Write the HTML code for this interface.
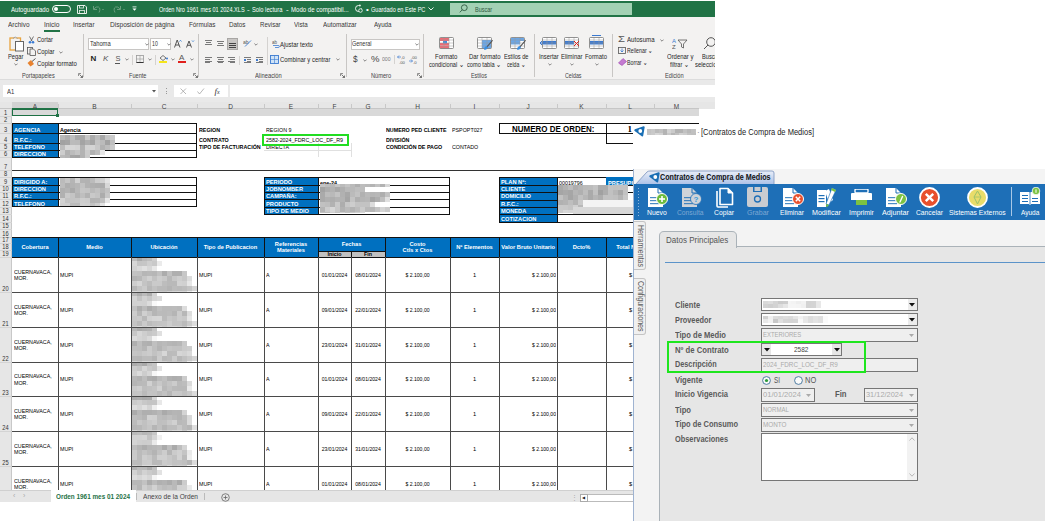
<!DOCTYPE html><html><head><meta charset="utf-8"><style>
html,body{margin:0;padding:0;width:1048px;height:521px;overflow:hidden;background:#fff;font-family:"Liberation Sans",sans-serif}
div,svg{position:absolute}
div div{position:absolute}
.t{white-space:nowrap}
.t div{position:static}
</style></head><body>
<div style="left:0px;top:1px;width:715px;height:16px;background:#217346"></div>
<div class="t" style="left:11.00px;top:4.6px;color:#fff;font-size:8px;line-height:10px;transform:scaleX(0.7560);transform-origin:0 0;"><span id="m1">Autoguardado</span></div>
<div style="left:52px;top:5px;width:19px;height:8px;border:1px solid #fff;border-radius:5px;box-sizing:border-box"></div>
<div style="left:54px;top:7px;width:4px;height:4px;background:#fff;border-radius:50%"></div>
<svg style="position:absolute;left:77px;top:5px" width="10" height="9" viewBox="0 0 10 9"><path d="M0.5 0.5 H8 L9.5 2 V8.5 H0.5 Z" fill="none" stroke="#e8f0ea" stroke-width="1"/><rect x="2.5" y="0.5" width="4" height="2.5" fill="none" stroke="#e8f0ea" stroke-width="0.8"/><rect x="2.5" y="5.5" width="5" height="3" fill="none" stroke="#e8f0ea" stroke-width="0.8"/></svg>
<svg style="position:absolute;left:92px;top:5px" width="34" height="9" viewBox="0 0 34 9"><path d="M1.5 1 V4.5 H5 M1.8 4.3 Q4 1 6.5 2 Q9 3.5 7 7.5" fill="none" stroke="#6a9e7e" stroke-width="1"/><path d="M10 4 L11 5 L12 4" fill="none" stroke="#6a9e7e" stroke-width="0.7"/><path d="M28.5 1 V4.5 H25 M28.2 4.3 Q26 1 23.5 2 Q21 3.5 23 7.5" fill="none" stroke="#6a9e7e" stroke-width="1"/><path d="M31 4 L32 5 L33 4" fill="none" stroke="#6a9e7e" stroke-width="0.7"/></svg>
<svg style="position:absolute;left:132px;top:6px" width="5" height="6" viewBox="0 0 5 6"><rect x="0.5" y="0.5" width="4" height="0.8" fill="#fff"/><path d="M0.5 2.5 L2.5 4.8 L4.5 2.5 Z" fill="#fff"/></svg>
<div class="t" style="left:158.60px;top:4.6px;color:#fff;font-size:8px;line-height:10px;transform:scaleX(0.6949);transform-origin:0 0;"><span id="m2">Orden Nro 1961 mes 01 2024.XLS</span></div>
<div class="t" style="left:247px;top:4.6px;color:#fff;font-size:8px;line-height:10px">-</div>
<div class="t" style="left:252.20px;top:4.6px;color:#fff;font-size:8px;line-height:10px;transform:scaleX(0.7195);transform-origin:0 0;"><span id="m3">Solo lectura</span></div>
<div class="t" style="left:286px;top:4.6px;color:#fff;font-size:8px;line-height:10px">-</div>
<div class="t" style="left:291.20px;top:4.6px;color:#fff;font-size:8px;line-height:10px;transform:scaleX(0.7574);transform-origin:0 0;"><span id="m4">Modo de compatibil...</span></div>
<svg style="position:absolute;left:354px;top:4px" width="9" height="9" viewBox="0 0 9 9"><path d="M7.5 4.5 A3 3 0 1 1 4.5 1.5 L6 1.5" fill="none" stroke="#fff" stroke-width="0.9"/><path d="M5.5 0.3 L6.8 1.5 L5.5 2.7" fill="none" stroke="#fff" stroke-width="0.8"/><circle cx="6.5" cy="6.5" r="1.8" fill="#217346" stroke="#fff" stroke-width="0.8"/></svg>
<div class="t" style="left:366px;top:4.6px;color:#fff;font-size:8px;line-height:10px">•</div>
<div class="t" style="left:371.00px;top:4.6px;color:#fff;font-size:8px;line-height:10px;transform:scaleX(0.6949);transform-origin:0 0;"><span id="m5">Guardado en Este PC</span></div>
<svg style="position:absolute;left:428px;top:7px" width="6" height="4" viewBox="0 0 6 4"><path d="M0.5 0.5 L3 3 L5.5 0.5" fill="none" stroke="#fff" stroke-width="0.9"/></svg>
<div style="left:450px;top:3px;width:182px;height:12px;background:#a3d1b4"></div>
<svg style="position:absolute;left:459px;top:4px" width="9" height="9" viewBox="0 0 9 9"><circle cx="5.3" cy="3.7" r="2.9" fill="none" stroke="#2f5a40" stroke-width="0.9"/><path d="M3.3 5.8 L0.7 8.4" stroke="#2f5a40" stroke-width="0.9"/></svg>
<div class="t" style="left:475.00px;top:4.6px;color:#2f5a40;font-size:8px;line-height:10px;transform:scaleX(0.6906);transform-origin:0 0;"><span id="m6">Buscar</span></div>
<div style="left:0px;top:17px;width:715px;height:62px;background:#f3f2f1"></div>
<div class="t" style="left:7.70px;top:20.4px;color:#383838;font-size:8px;line-height:10px;transform:scaleX(0.8056);transform-origin:0 0;"><span id="m7">Archivo</span></div>
<div class="t" style="left:43.80px;top:20.4px;color:#383838;font-size:8px;line-height:10px;transform:scaleX(0.8294);transform-origin:0 0;"><span id="m8">Inicio</span></div>
<div class="t" style="left:73.00px;top:20.4px;color:#383838;font-size:8px;line-height:10px;transform:scaleX(0.7926);transform-origin:0 0;"><span id="m9">Insertar</span></div>
<div class="t" style="left:110.00px;top:20.4px;color:#383838;font-size:8px;line-height:10px;transform:scaleX(0.8227);transform-origin:0 0;"><span id="m10">Disposición de página</span></div>
<div class="t" style="left:188.70px;top:20.4px;color:#383838;font-size:8px;line-height:10px;transform:scaleX(0.7888);transform-origin:0 0;"><span id="m11">Fórmulas</span></div>
<div class="t" style="left:229.40px;top:20.4px;color:#383838;font-size:8px;line-height:10px;transform:scaleX(0.7892);transform-origin:0 0;"><span id="m12">Datos</span></div>
<div class="t" style="left:260.00px;top:20.4px;color:#383838;font-size:8px;line-height:10px;transform:scaleX(0.7594);transform-origin:0 0;"><span id="m13">Revisar</span></div>
<div class="t" style="left:294.30px;top:20.4px;color:#383838;font-size:8px;line-height:10px;transform:scaleX(0.7766);transform-origin:0 0;"><span id="m14">Vista</span></div>
<div class="t" style="left:323.30px;top:20.4px;color:#383838;font-size:8px;line-height:10px;transform:scaleX(0.7895);transform-origin:0 0;"><span id="m15">Automatizar</span></div>
<div class="t" style="left:373.50px;top:20.4px;color:#383838;font-size:8px;line-height:10px;transform:scaleX(0.7762);transform-origin:0 0;"><span id="m16">Ayuda</span></div>
<div style="left:44px;top:30px;width:16px;height:2px;background:#217346"></div>
<div style="left:83px;top:34px;width:1px;height:43px;background:#c8c6c4"></div>
<div style="left:198px;top:34px;width:1px;height:43px;background:#c8c6c4"></div>
<div style="left:346px;top:34px;width:1px;height:43px;background:#c8c6c4"></div>
<div style="left:423px;top:34px;width:1px;height:43px;background:#c8c6c4"></div>
<div style="left:534px;top:34px;width:1px;height:43px;background:#c8c6c4"></div>
<div style="left:612px;top:34px;width:1px;height:43px;background:#c8c6c4"></div>
<div class="t" style="left:22.00px;top:71px;color:#444;font-size:7.5px;line-height:9px;transform:scaleX(0.7398);transform-origin:0 0;"><span id="m17">Portapapeles</span></div>
<div class="t" style="left:129.00px;top:71px;color:#444;font-size:7.5px;line-height:9px;transform:scaleX(0.7449);transform-origin:0 0;"><span id="m18">Fuente</span></div>
<div class="t" style="left:255.00px;top:71px;color:#444;font-size:7.5px;line-height:9px;transform:scaleX(0.7744);transform-origin:0 0;"><span id="m19">Alineación</span></div>
<div class="t" style="left:370.50px;top:71px;color:#444;font-size:7.5px;line-height:9px;transform:scaleX(0.7532);transform-origin:0 0;"><span id="m20">Número</span></div>
<div class="t" style="left:470.70px;top:71px;color:#444;font-size:7.5px;line-height:9px;transform:scaleX(0.7197);transform-origin:0 0;"><span id="m21">Estilos</span></div>
<div class="t" style="left:565.00px;top:71px;color:#444;font-size:7.5px;line-height:9px;transform:scaleX(0.7064);transform-origin:0 0;"><span id="m22">Celdas</span></div>
<div class="t" style="left:664.50px;top:71px;color:#444;font-size:7.5px;line-height:9px;transform:scaleX(0.7599);transform-origin:0 0;"><span id="m23">Edición</span></div>
<svg style="position:absolute;left:78px;top:73px" width="5" height="5" viewBox="0 0 5 5"><path d="M0.5 3 V0.5 H3" fill="none" stroke="#777" stroke-width="0.8"/><path d="M1.5 1.5 L4.5 4.5 M4.5 2.5 V4.5 H2.5" fill="none" stroke="#555" stroke-width="0.8"/></svg>
<svg style="position:absolute;left:193px;top:73px" width="5" height="5" viewBox="0 0 5 5"><path d="M0.5 3 V0.5 H3" fill="none" stroke="#777" stroke-width="0.8"/><path d="M1.5 1.5 L4.5 4.5 M4.5 2.5 V4.5 H2.5" fill="none" stroke="#555" stroke-width="0.8"/></svg>
<svg style="position:absolute;left:340px;top:73px" width="5" height="5" viewBox="0 0 5 5"><path d="M0.5 3 V0.5 H3" fill="none" stroke="#777" stroke-width="0.8"/><path d="M1.5 1.5 L4.5 4.5 M4.5 2.5 V4.5 H2.5" fill="none" stroke="#555" stroke-width="0.8"/></svg>
<svg style="position:absolute;left:417px;top:73px" width="5" height="5" viewBox="0 0 5 5"><path d="M0.5 3 V0.5 H3" fill="none" stroke="#777" stroke-width="0.8"/><path d="M1.5 1.5 L4.5 4.5 M4.5 2.5 V4.5 H2.5" fill="none" stroke="#555" stroke-width="0.8"/></svg>
<svg style="position:absolute;left:9px;top:36px" width="16" height="16" viewBox="0 0 16 16"><rect x="1" y="2" width="10.5" height="12" fill="none" stroke="#e8a33d" stroke-width="1.3"/><path d="M4 2.5 Q6 -0.5 8.5 2.5" fill="#fff" stroke="#888" stroke-width="0.8"/><rect x="6.5" y="5.5" width="8" height="9.5" fill="#fff" stroke="#666" stroke-width="1"/></svg>
<div class="t" style="left:7.70px;top:52px;color:#262626;font-size:8px;line-height:10px;transform:scaleX(0.7163);transform-origin:0 0;"><span id="m24">Pegar</span></div>
<svg style="position:absolute;left:13.5px;top:63px" width="4" height="3" viewBox="0 0 4 3"><path d="M0.4 0.6 L2 2.2 L3.6 0.6" fill="none" stroke="#555" stroke-width="0.7"/></svg>
<svg style="position:absolute;left:28px;top:36px" width="7" height="8" viewBox="0 0 7 8"><path d="M1.5 0.5 L4 5 M5.5 0.5 L3 5" stroke="#555" stroke-width="0.8"/><circle cx="2" cy="6.3" r="1.3" fill="#3b7ad0"/><circle cx="5" cy="6.3" r="1.3" fill="#3b7ad0"/></svg>
<div class="t" style="left:37.00px;top:35px;color:#262626;font-size:8px;line-height:10px;transform:scaleX(0.7106);transform-origin:0 0;"><span id="m25">Cortar</span></div>
<svg style="position:absolute;left:27px;top:47px" width="9" height="9" viewBox="0 0 9 9"><rect x="0.5" y="0.5" width="5" height="6.5" fill="none" stroke="#555" stroke-width="0.8"/><path d="M3 2 H6.5 L8.5 4 V8.5 H3 Z" fill="#f3f2f1" stroke="#555" stroke-width="0.8"/></svg>
<div class="t" style="left:37.00px;top:47px;color:#262626;font-size:8px;line-height:10px;transform:scaleX(0.7422);transform-origin:0 0;"><span id="m26">Copiar</span></div>
<svg style="position:absolute;left:58.5px;top:51px" width="4" height="3" viewBox="0 0 4 3"><path d="M0.4 0.6 L2 2.2 L3.6 0.6" fill="none" stroke="#555" stroke-width="0.7"/></svg>
<svg style="position:absolute;left:27px;top:58px" width="9" height="9" viewBox="0 0 9 9"><path d="M0.5 5 L4 2 L7 6 L3.5 8.5 Z" fill="#e8822e"/><path d="M5 3.5 L8.5 0.5" stroke="#555" stroke-width="1"/></svg>
<div class="t" style="left:37.00px;top:59px;color:#262626;font-size:8px;line-height:10px;transform:scaleX(0.7521);transform-origin:0 0;"><span id="m27">Copiar formato</span></div>
<div style="left:88px;top:38px;width:61px;height:12px;background:#fff;border:1px solid #c8c6c4;box-sizing:border-box"></div>
<div class="t" style="left:90.30px;top:39px;color:#333;font-size:8px;line-height:10px;transform:scaleX(0.7271);transform-origin:0 0;"><span id="m28">Tahoma</span></div>
<svg style="position:absolute;left:144.5px;top:43px" width="4" height="3" viewBox="0 0 4 3"><path d="M0.4 0.6 L2 2.2 L3.6 0.6" fill="none" stroke="#555" stroke-width="0.7"/></svg>
<div style="left:150px;top:38px;width:21px;height:12px;background:#fff;border:1px solid #c8c6c4;box-sizing:border-box"></div>
<div class="t" style="left:151.80px;top:39px;color:#333;font-size:8px;line-height:10px;transform:scaleX(0.6512);transform-origin:0 0;"><span id="m29">10</span></div>
<svg style="position:absolute;left:166.5px;top:43px" width="4" height="3" viewBox="0 0 4 3"><path d="M0.4 0.6 L2 2.2 L3.6 0.6" fill="none" stroke="#555" stroke-width="0.7"/></svg>
<svg style="position:absolute;left:174px;top:39px" width="21" height="9" viewBox="0 0 21 9"><path d="M0.5 8.5 L3.2 1 L6 8.5 M1.5 6 H5" fill="none" stroke="#444" stroke-width="0.9"/><path d="M5.5 2.5 L6.5 1.3 L7.5 2.5" fill="none" stroke="#2b79d0" stroke-width="0.8"/><path d="M12.5 8.5 L15 2 L17.5 8.5 M13.4 6.3 H16.6" fill="none" stroke="#444" stroke-width="0.9"/><path d="M18 1.5 L19 2.6 L20 1.5" fill="none" stroke="#2b79d0" stroke-width="0.8"/></svg>
<div class="t" style="left:90.6px;top:54px;color:#222;font-size:8px;line-height:10px;font-weight:bold">N</div>
<div class="t" style="left:103px;top:54px;color:#555;font-size:8px;line-height:10px;font-style:italic">K</div>
<div class="t" style="left:115.5px;top:54px;color:#555;font-size:7.5px;line-height:10px">S</div>
<div style="left:115px;top:63px;width:5px;height:1px;background:#555"></div>
<svg style="position:absolute;left:124.5px;top:58px" width="4" height="3" viewBox="0 0 4 3"><path d="M0.4 0.6 L2 2.2 L3.6 0.6" fill="none" stroke="#555" stroke-width="0.7"/></svg>
<div style="left:132px;top:55px;width:1px;height:10px;background:#d4d2d0"></div>
<svg style="position:absolute;left:136px;top:55px" width="8" height="8" viewBox="0 0 8 8"><rect x="0.5" y="0.5" width="7" height="7" fill="none" stroke="#999" stroke-width="0.8"/><path d="M4 0.5 V7.5 M0.5 4 H7.5" stroke="#999" stroke-width="0.6"/><path d="M0.5 7.5 H7.5" stroke="#333" stroke-width="1"/></svg>
<svg style="position:absolute;left:147.5px;top:58px" width="4" height="3" viewBox="0 0 4 3"><path d="M0.4 0.6 L2 2.2 L3.6 0.6" fill="none" stroke="#555" stroke-width="0.7"/></svg>
<div style="left:155px;top:55px;width:1px;height:10px;background:#d4d2d0"></div>
<svg style="position:absolute;left:159px;top:55px" width="9" height="6" viewBox="0 0 9 6"><path d="M1 3 L4 0.5 L7 3 L4 5.5 Z" fill="none" stroke="#555" stroke-width="0.8"/><circle cx="8" cy="3.5" r="1" fill="#3b7ad0"/></svg>
<div style="left:159px;top:61px;width:8px;height:2px;background:#f5e51c"></div>
<svg style="position:absolute;left:170.5px;top:58px" width="4" height="3" viewBox="0 0 4 3"><path d="M0.4 0.6 L2 2.2 L3.6 0.6" fill="none" stroke="#555" stroke-width="0.7"/></svg>
<div class="t" style="left:179px;top:53px;color:#555;font-size:8px;line-height:9px">A</div>
<div style="left:178px;top:61px;width:8px;height:2px;background:#e0201c"></div>
<svg style="position:absolute;left:189.5px;top:58px" width="4" height="3" viewBox="0 0 4 3"><path d="M0.4 0.6 L2 2.2 L3.6 0.6" fill="none" stroke="#555" stroke-width="0.7"/></svg>
<div style="left:205px;top:39.5px;width:7px;height:1px;background:#7a7a7a"></div>
<div style="left:206px;top:41.7px;width:5px;height:1px;background:#7a7a7a"></div>
<div style="left:205px;top:43.9px;width:7px;height:1px;background:#7a7a7a"></div>
<div style="left:217px;top:41.0px;width:7px;height:1px;background:#7a7a7a"></div>
<div style="left:218px;top:43.2px;width:5px;height:1px;background:#7a7a7a"></div>
<div style="left:217px;top:45.4px;width:7px;height:1px;background:#7a7a7a"></div>
<div style="left:227px;top:38px;width:11px;height:12px;background:#c8c6c4;border:1px solid #a8a6a4;box-sizing:border-box"></div>
<div style="left:229px;top:42.5px;width:7px;height:1px;background:#444"></div>
<div style="left:229px;top:44.7px;width:7px;height:1px;background:#444"></div>
<div style="left:229px;top:46.9px;width:7px;height:1px;background:#444"></div>
<svg style="position:absolute;left:243px;top:39px" width="14" height="8" viewBox="0 0 14 8"><text x="0" y="5" font-size="5" fill="#555" font-family="Liberation Sans">ab</text><path d="M2 7.5 L8 1.5" stroke="#3b7ad0" stroke-width="0.9"/></svg>
<svg style="position:absolute;left:254.0px;top:43px" width="4" height="3" viewBox="0 0 4 3"><path d="M0.4 0.6 L2 2.2 L3.6 0.6" fill="none" stroke="#555" stroke-width="0.7"/></svg>
<div style="left:267px;top:37px;width:1px;height:28px;background:#d4d2d0"></div>
<svg style="position:absolute;left:272px;top:40px" width="8" height="8" viewBox="0 0 8 8"><text x="0" y="4" font-size="4.5" fill="#555" font-family="Liberation Sans">ab</text><path d="M1 5.5 H6 Q7.5 5.5 7.5 6.5 Q7.5 7.5 6 7.5 H3" fill="none" stroke="#3b7ad0" stroke-width="0.8"/></svg>
<div class="t" style="left:280.40px;top:39.7px;color:#262626;font-size:8px;line-height:10px;transform:scaleX(0.7398);transform-origin:0 0;"><span id="m30">Ajustar texto</span></div>
<div style="left:205px;top:57.0px;width:7px;height:1px;background:#7a7a7a"></div>
<div style="left:205px;top:58.8px;width:5px;height:1px;background:#7a7a7a"></div>
<div style="left:205px;top:60.6px;width:7px;height:1px;background:#7a7a7a"></div>
<div style="left:205px;top:62.4px;width:5px;height:1px;background:#7a7a7a"></div>
<div style="left:217px;top:57.0px;width:7px;height:1px;background:#7a7a7a"></div>
<div style="left:218px;top:58.8px;width:5px;height:1px;background:#7a7a7a"></div>
<div style="left:217px;top:60.6px;width:7px;height:1px;background:#7a7a7a"></div>
<div style="left:218px;top:62.4px;width:5px;height:1px;background:#7a7a7a"></div>
<div style="left:228px;top:57.0px;width:7px;height:1px;background:#7a7a7a"></div>
<div style="left:230px;top:58.8px;width:5px;height:1px;background:#7a7a7a"></div>
<div style="left:228px;top:60.6px;width:7px;height:1px;background:#7a7a7a"></div>
<div style="left:230px;top:62.4px;width:5px;height:1px;background:#7a7a7a"></div>
<div style="left:239px;top:56px;width:1px;height:9px;background:#d4d2d0"></div>
<div style="left:244px;top:57.0px;width:7px;height:1px;background:#7a7a7a"></div>
<div style="left:247px;top:58.8px;width:4px;height:1px;background:#7a7a7a"></div>
<div style="left:247px;top:60.6px;width:4px;height:1px;background:#7a7a7a"></div>
<div style="left:244px;top:62.4px;width:7px;height:1px;background:#7a7a7a"></div>
<div style="left:244px;top:59px;width:2px;height:2px;background:#3b7ad0"></div>
<div style="left:256px;top:57.0px;width:7px;height:1px;background:#7a7a7a"></div>
<div style="left:259px;top:58.8px;width:4px;height:1px;background:#7a7a7a"></div>
<div style="left:259px;top:60.6px;width:4px;height:1px;background:#7a7a7a"></div>
<div style="left:256px;top:62.4px;width:7px;height:1px;background:#7a7a7a"></div>
<div style="left:256px;top:59px;width:2px;height:2px;background:#3b7ad0"></div>
<svg style="position:absolute;left:270px;top:55px" width="9" height="9" viewBox="0 0 9 9"><rect x="0.5" y="0.5" width="8" height="8" fill="#cfe3f7" stroke="#3b7ad0" stroke-width="0.9"/><path d="M4.5 0.5 V8.5 M0.5 4.5 H8.5" stroke="#3b7ad0" stroke-width="0.6"/></svg>
<div class="t" style="left:280.40px;top:54.7px;color:#262626;font-size:8px;line-height:10px;transform:scaleX(0.7408);transform-origin:0 0;"><span id="m31">Combinar y centrar</span></div>
<svg style="position:absolute;left:335.5px;top:58px" width="4" height="3" viewBox="0 0 4 3"><path d="M0.4 0.6 L2 2.2 L3.6 0.6" fill="none" stroke="#555" stroke-width="0.7"/></svg>
<div style="left:350.5px;top:38.5px;width:69px;height:11px;background:#fff;border:1px solid #c8c6c4;box-sizing:border-box"></div>
<div class="t" style="left:352.00px;top:39px;color:#333;font-size:8px;line-height:10px;transform:scaleX(0.6850);transform-origin:0 0;"><span id="m32">General</span></div>
<svg style="position:absolute;left:414.5px;top:43px" width="4" height="3" viewBox="0 0 4 3"><path d="M0.4 0.6 L2 2.2 L3.6 0.6" fill="none" stroke="#555" stroke-width="0.7"/></svg>
<div class="t" style="left:353.00px;top:54px;color:#444;font-size:9px;line-height:10px;transform:scaleX(0.9171);transform-origin:0 0;"><span id="m33">$</span></div>
<svg style="position:absolute;left:362.5px;top:59px" width="4" height="3" viewBox="0 0 4 3"><path d="M0.4 0.6 L2 2.2 L3.6 0.6" fill="none" stroke="#555" stroke-width="0.7"/></svg>
<div class="t" style="left:370.50px;top:54px;color:#444;font-size:9px;line-height:10px;transform:scaleX(1.0604);transform-origin:0 0;"><span id="m34">%</span></div>
<div class="t" style="left:382.40px;top:56px;color:#777;font-size:5.5px;line-height:7px;transform:scaleX(0.9361);transform-origin:0 0;"><span id="m35">000</span></div>
<div style="left:394px;top:55px;width:1px;height:9px;background:#d4d2d0"></div>
<svg style="position:absolute;left:397px;top:54px" width="22" height="10" viewBox="0 0 22 10"><path d="M0.5 3 H4 M0.5 3 L2 1.5 M0.5 3 L2 4.5" stroke="#3b7ad0" stroke-width="0.7" fill="none"/><text x="4" y="4.5" font-size="4.2" fill="#555" font-family="Liberation Sans">,0</text><text x="2" y="9.5" font-size="4.2" fill="#555" font-family="Liberation Sans">,00</text><text x="14" y="4.5" font-size="4.2" fill="#555" font-family="Liberation Sans">,00</text><path d="M12 7 H15.5 L14 5.5 M15.5 7 L14 8.5" stroke="#3b7ad0" stroke-width="0.7" fill="none"/><text x="16" y="9.5" font-size="4.2" fill="#555" font-family="Liberation Sans">,0</text></svg>
<svg style="position:absolute;left:439px;top:37px" width="15" height="12" viewBox="0 0 15 12"><rect x="0.5" y="0.5" width="14" height="11" rx="1" fill="#fff"/><rect x="1" y="1" width="9" height="3" fill="#ee6a74"/><rect x="1" y="8.5" width="9" height="3" fill="#ee6a74"/><rect x="1" y="6" width="9" height="2.5" fill="#ee6a74"/><rect x="4" y="4" width="4" height="2.3" fill="#3b8ee0"/><path d="M0.5 3.0 H14.5" stroke="#999" stroke-width="0.5"/><path d="M0.5 6.0 H14.5" stroke="#999" stroke-width="0.5"/><path d="M0.5 9.0 H14.5" stroke="#999" stroke-width="0.5"/><path d="M5.0 0.5 V11.5" stroke="#999" stroke-width="0.5"/><path d="M10.0 0.5 V11.5" stroke="#999" stroke-width="0.5"/><rect x="0.5" y="0.5" width="14" height="11" rx="1" fill="none" stroke="#777" stroke-width="0.8"/></svg>
<svg style="position:absolute;left:477px;top:37px" width="15" height="12" viewBox="0 0 15 12"><rect x="0.5" y="0.5" width="14" height="11" rx="1" fill="#fff"/><rect x="5" y="3" width="9" height="8.5" fill="#6aa7e8"/><path d="M0.5 3.0 H14.5" stroke="#999" stroke-width="0.5"/><path d="M0.5 6.0 H14.5" stroke="#999" stroke-width="0.5"/><path d="M0.5 9.0 H14.5" stroke="#999" stroke-width="0.5"/><path d="M5.0 0.5 V11.5" stroke="#999" stroke-width="0.5"/><path d="M10.0 0.5 V11.5" stroke="#999" stroke-width="0.5"/><rect x="0.5" y="0.5" width="14" height="11" rx="1" fill="none" stroke="#777" stroke-width="0.8"/></svg>
<svg style="position:absolute;left:483px;top:40px" width="10" height="11" viewBox="0 0 10 11"><path d="M9.3 0.7 L4.2 6.6" stroke="#555" stroke-width="1.1" stroke-linecap="round"/><path d="M3.6 6 Q1.2 6.5 1 9.8 Q4.3 9.8 4.9 7.2 Z" fill="#3b8ee0"/></svg>
<svg style="position:absolute;left:510px;top:37px" width="15" height="12" viewBox="0 0 15 12"><rect x="0.5" y="0.5" width="14" height="11" rx="1" fill="#fff"/><rect x="1" y="1" width="13" height="3" fill="#6aa7e8"/><rect x="1" y="4" width="9" height="3.5" fill="#6aa7e8"/><path d="M0.5 3.0 H14.5" stroke="#999" stroke-width="0.5"/><path d="M0.5 6.0 H14.5" stroke="#999" stroke-width="0.5"/><path d="M0.5 9.0 H14.5" stroke="#999" stroke-width="0.5"/><path d="M5.0 0.5 V11.5" stroke="#999" stroke-width="0.5"/><path d="M10.0 0.5 V11.5" stroke="#999" stroke-width="0.5"/><rect x="0.5" y="0.5" width="14" height="11" rx="1" fill="none" stroke="#777" stroke-width="0.8"/></svg>
<svg style="position:absolute;left:516px;top:40px" width="10" height="11" viewBox="0 0 10 11"><path d="M9.3 0.7 L4.2 6.6" stroke="#555" stroke-width="1.1" stroke-linecap="round"/><path d="M3.6 6 Q1.2 6.5 1 9.8 Q4.3 9.8 4.9 7.2 Z" fill="#3b8ee0"/></svg>
<div class="t" style="left:434.80px;top:52px;color:#262626;font-size:7.5px;line-height:9px;transform:scaleX(0.8018);transform-origin:0 0;"><span id="m36">Formato</span></div>
<div class="t" style="left:428.70px;top:60px;color:#262626;font-size:7.5px;line-height:9px;transform:scaleX(0.7509);transform-origin:0 0;"><span id="m37">condicional ⌄</span></div>
<div class="t" style="left:468.75px;top:52px;color:#262626;font-size:7.5px;line-height:9px;transform:scaleX(0.7953);transform-origin:0 0;"><span id="m38">Dar formato</span></div>
<div class="t" style="left:466.90px;top:60px;color:#262626;font-size:7.5px;line-height:9px;transform:scaleX(0.7514);transform-origin:0 0;"><span id="m39">como tabla ⌄</span></div>
<div class="t" style="left:504.45px;top:52px;color:#262626;font-size:7.5px;line-height:9px;transform:scaleX(0.7531);transform-origin:0 0;"><span id="m40">Estilos de</span></div>
<div class="t" style="left:506.95px;top:60px;color:#262626;font-size:7.5px;line-height:9px;transform:scaleX(0.6848);transform-origin:0 0;"><span id="m41">celda ⌄</span></div>
<svg style="position:absolute;left:541.5px;top:37px" width="15" height="12" viewBox="0 0 15 12"><rect x="0.5" y="0.5" width="14" height="11" rx="1" fill="#fff"/><rect x="1" y="4" width="13" height="3.5" fill="#3b7ad0"/><path d="M0.5 3.0 H14.5" stroke="#999" stroke-width="0.5"/><path d="M0.5 6.0 H14.5" stroke="#999" stroke-width="0.5"/><path d="M0.5 9.0 H14.5" stroke="#999" stroke-width="0.5"/><path d="M5.0 0.5 V11.5" stroke="#999" stroke-width="0.5"/><path d="M10.0 0.5 V11.5" stroke="#999" stroke-width="0.5"/><rect x="0.5" y="0.5" width="14" height="11" rx="1" fill="none" stroke="#777" stroke-width="0.8"/></svg>
<svg style="position:absolute;left:539px;top:40px" width="6" height="6" viewBox="0 0 6 6"><path d="M5.5 3 H1 M3 1 L1 3 L3 5" stroke="#3b7ad0" stroke-width="1" fill="none"/></svg>
<svg style="position:absolute;left:564.4px;top:37px" width="15" height="12" viewBox="0 0 15 12"><rect x="0.5" y="0.5" width="14" height="11" rx="1" fill="#fff"/><rect x="1" y="4" width="9" height="3.5" fill="#3b7ad0"/><path d="M0.5 3.0 H14.5" stroke="#999" stroke-width="0.5"/><path d="M0.5 6.0 H14.5" stroke="#999" stroke-width="0.5"/><path d="M0.5 9.0 H14.5" stroke="#999" stroke-width="0.5"/><path d="M5.0 0.5 V11.5" stroke="#999" stroke-width="0.5"/><path d="M10.0 0.5 V11.5" stroke="#999" stroke-width="0.5"/><rect x="0.5" y="0.5" width="14" height="11" rx="1" fill="none" stroke="#777" stroke-width="0.8"/></svg>
<svg style="position:absolute;left:573px;top:40px" width="7" height="7" viewBox="0 0 7 7"><path d="M1 1 L6 6 M6 1 L1 6" stroke="#e0201c" stroke-width="1" fill="none"/></svg>
<svg style="position:absolute;left:589px;top:37px" width="15" height="12" viewBox="0 0 15 12"><rect x="0.5" y="0.5" width="14" height="11" rx="1" fill="#fff"/><rect x="1" y="4" width="13" height="3.5" fill="#3b7ad0"/><path d="M0.5 3.0 H14.5" stroke="#999" stroke-width="0.5"/><path d="M0.5 6.0 H14.5" stroke="#999" stroke-width="0.5"/><path d="M0.5 9.0 H14.5" stroke="#999" stroke-width="0.5"/><path d="M5.0 0.5 V11.5" stroke="#999" stroke-width="0.5"/><path d="M10.0 0.5 V11.5" stroke="#999" stroke-width="0.5"/><rect x="0.5" y="0.5" width="14" height="11" rx="1" fill="none" stroke="#777" stroke-width="0.8"/></svg>
<div style="left:592px;top:35px;width:9px;height:1px;background:#3b7ad0"></div>
<div class="t" style="left:538.80px;top:52px;color:#262626;font-size:7.5px;line-height:9px;transform:scaleX(0.7784);transform-origin:0 0;"><span id="m42">Insertar</span></div>
<div class="t" style="left:560.90px;top:52px;color:#262626;font-size:7.5px;line-height:9px;transform:scaleX(0.7935);transform-origin:0 0;"><span id="m43">Eliminar</span></div>
<div class="t" style="left:585.00px;top:52px;color:#262626;font-size:7.5px;line-height:9px;transform:scaleX(0.7875);transform-origin:0 0;"><span id="m44">Formato</span></div>
<svg style="position:absolute;left:547.5px;top:63px" width="4" height="3" viewBox="0 0 4 3"><path d="M0.4 0.6 L2 2.2 L3.6 0.6" fill="none" stroke="#555" stroke-width="0.7"/></svg>
<svg style="position:absolute;left:570.0px;top:63px" width="4" height="3" viewBox="0 0 4 3"><path d="M0.4 0.6 L2 2.2 L3.6 0.6" fill="none" stroke="#555" stroke-width="0.7"/></svg>
<svg style="position:absolute;left:594.5px;top:63px" width="4" height="3" viewBox="0 0 4 3"><path d="M0.4 0.6 L2 2.2 L3.6 0.6" fill="none" stroke="#555" stroke-width="0.7"/></svg>
<div class="t" style="left:618.30px;top:34px;color:#555;font-size:9px;line-height:10px;transform:scaleX(1.2549);transform-origin:0 0;"><span id="m45">Σ</span></div>
<div class="t" style="left:627.40px;top:35px;color:#262626;font-size:8px;line-height:10px;transform:scaleX(0.7660);transform-origin:0 0;"><span id="m46">Autosuma</span></div>
<svg style="position:absolute;left:659.5px;top:39px" width="4" height="3" viewBox="0 0 4 3"><path d="M0.4 0.6 L2 2.2 L3.6 0.6" fill="none" stroke="#555" stroke-width="0.7"/></svg>
<svg style="position:absolute;left:618px;top:47px" width="8" height="7" viewBox="0 0 8 7"><rect x="0.5" y="0.5" width="7" height="6" fill="none" stroke="#555" stroke-width="0.8"/><path d="M4 1.5 V5 M2.5 3.5 L4 5 L5.5 3.5" stroke="#3b7ad0" stroke-width="0.8" fill="none"/></svg>
<div class="t" style="left:627.40px;top:46px;color:#262626;font-size:8px;line-height:10px;transform:scaleX(0.6613);transform-origin:0 0;"><span id="m47">Rellenar ⌄</span></div>
<svg style="position:absolute;left:618px;top:58px" width="9" height="8" viewBox="0 0 9 8"><path d="M0.5 5 L5 0.5 L8.5 3.5 L4 7.5 Z" fill="#c47bd1" stroke="#9b3fae" stroke-width="0.6"/></svg>
<div class="t" style="left:627.40px;top:58px;color:#262626;font-size:8px;line-height:10px;transform:scaleX(0.6549);transform-origin:0 0;"><span id="m48">Borrar ⌄</span></div>
<svg style="position:absolute;left:672px;top:37px" width="16" height="13" viewBox="0 0 16 13"><text x="0" y="5.5" font-size="6" fill="#3b7ad0" font-family="Liberation Sans">A</text><text x="0" y="12" font-size="6" fill="#555" font-family="Liberation Sans">Z</text><path d="M6 3 H15 L11.5 7 V11 L9.5 10 V7 Z" fill="none" stroke="#555" stroke-width="0.8"/></svg>
<div class="t" style="left:666.75px;top:52px;color:#262626;font-size:7.5px;line-height:9px;transform:scaleX(0.7944);transform-origin:0 0;"><span id="m49">Ordenar y</span></div>
<div class="t" style="left:670.25px;top:60px;color:#262626;font-size:7.5px;line-height:9px;transform:scaleX(0.7340);transform-origin:0 0;"><span id="m50">filtrar ⌄</span></div>
<svg style="position:absolute;left:703px;top:37px" width="12" height="13" viewBox="0 0 12 13"><circle cx="8" cy="5" r="4.3" fill="none" stroke="#444" stroke-width="0.9"/><path d="M5 8 L1 12" stroke="#444" stroke-width="0.9"/></svg>
<div class="t" style="left:702.00px;top:52px;color:#262626;font-size:7.5px;line-height:9px;transform:scaleX(0.7537);transform-origin:0 0;"><span id="m51">Buscar y</span></div>
<div class="t" style="left:695.00px;top:60px;color:#262626;font-size:7.5px;line-height:9px;transform:scaleX(0.7908);transform-origin:0 0;"><span id="m52">seleccionar</span></div>
<div style="left:715px;top:17px;width:20px;height:62px;background:#fff"></div>
<div style="left:0px;top:79px;width:715px;height:24px;background:#e9e9e9"></div>
<div style="left:0px;top:79px;width:715px;height:1px;background:#dcdcdc"></div>
<div style="left:3px;top:85px;width:155px;height:12px;background:#fff"></div>
<div class="t" style="left:6.90px;top:87px;color:#333;font-size:8px;line-height:9px;transform:scaleX(0.7451);transform-origin:0 0;"><span id="m53">A1</span></div>
<svg style="position:absolute;left:151.5px;top:90px" width="4" height="3" viewBox="0 0 4 3"><path d="M0 0 H4 L2 2.5 Z" fill="#555"/></svg>
<div style="left:166px;top:88px;width:1px;height:1px;background:#999"></div>
<div style="left:166px;top:90.5px;width:1px;height:1px;background:#999"></div>
<div style="left:166px;top:93px;width:1px;height:1px;background:#999"></div>
<div style="left:174px;top:85px;width:54px;height:12px;background:#fff"></div>
<svg style="position:absolute;left:180px;top:88px" width="28" height="7" viewBox="0 0 28 7"><path d="M0.5 0.5 L6 6 M6 0.5 L0.5 6" stroke="#999" stroke-width="0.7"/><path d="M17.5 3.5 L19.5 6 L24 0.5" stroke="#999" stroke-width="0.7" fill="none"/></svg>
<div class="t" style="left:214.5px;top:85.5px;color:#333;font-size:9px;line-height:11px;font-family:'Liberation Serif',serif"><i>f</i><span style="font-size:6px"><i>x</i></span></div>
<div style="left:230px;top:85px;width:485px;height:12px;background:#fff"></div>
<div style="left:0px;top:102px;width:715px;height:7px;background:#e6e6e6"></div>
<div style="left:0px;top:108px;width:699px;height:1px;background:#c6c6c6"></div>
<div style="left:12px;top:102px;width:46px;height:7px;background:#d2d2d2"></div>
<div style="left:12px;top:108px;width:46px;height:1px;background:#217346"></div>
<div class="t" style="left:12px;top:102.5px;color:#444;font-size:6.5px;line-height:7px"><div style="width:46px;text-align:center">A</div></div>
<div style="left:58px;top:104px;width:1px;height:5px;background:#c8c8c8"></div>
<div class="t" style="left:58px;top:102.5px;color:#444;font-size:6.5px;line-height:7px"><div style="width:73px;text-align:center">B</div></div>
<div style="left:131px;top:104px;width:1px;height:5px;background:#c8c8c8"></div>
<div class="t" style="left:131px;top:102.5px;color:#444;font-size:6.5px;line-height:7px"><div style="width:66px;text-align:center">C</div></div>
<div style="left:197px;top:104px;width:1px;height:5px;background:#c8c8c8"></div>
<div class="t" style="left:197px;top:102.5px;color:#444;font-size:6.5px;line-height:7px"><div style="width:67px;text-align:center">D</div></div>
<div style="left:264px;top:104px;width:1px;height:5px;background:#c8c8c8"></div>
<div class="t" style="left:264px;top:102.5px;color:#444;font-size:6.5px;line-height:7px"><div style="width:54px;text-align:center">E</div></div>
<div style="left:318px;top:104px;width:1px;height:5px;background:#c8c8c8"></div>
<div class="t" style="left:318px;top:102.5px;color:#444;font-size:6.5px;line-height:7px"><div style="width:33px;text-align:center">F</div></div>
<div style="left:351px;top:104px;width:1px;height:5px;background:#c8c8c8"></div>
<div class="t" style="left:351px;top:102.5px;color:#444;font-size:6.5px;line-height:7px"><div style="width:34px;text-align:center">G</div></div>
<div style="left:385px;top:104px;width:1px;height:5px;background:#c8c8c8"></div>
<div class="t" style="left:385px;top:102.5px;color:#444;font-size:6.5px;line-height:7px"><div style="width:65px;text-align:center">H</div></div>
<div style="left:450px;top:104px;width:1px;height:5px;background:#c8c8c8"></div>
<div class="t" style="left:450px;top:102.5px;color:#444;font-size:6.5px;line-height:7px"><div style="width:49px;text-align:center">I</div></div>
<div style="left:499px;top:104px;width:1px;height:5px;background:#c8c8c8"></div>
<div class="t" style="left:499px;top:102.5px;color:#444;font-size:6.5px;line-height:7px"><div style="width:58px;text-align:center">J</div></div>
<div style="left:557px;top:104px;width:1px;height:5px;background:#c8c8c8"></div>
<div class="t" style="left:557px;top:102.5px;color:#444;font-size:6.5px;line-height:7px"><div style="width:49px;text-align:center">K</div></div>
<div style="left:606px;top:104px;width:1px;height:5px;background:#c8c8c8"></div>
<div class="t" style="left:606px;top:102.5px;color:#444;font-size:6.5px;line-height:7px"><div style="width:48px;text-align:center">L</div></div>
<div style="left:654px;top:104px;width:1px;height:5px;background:#c8c8c8"></div>
<div class="t" style="left:654px;top:102.5px;color:#444;font-size:6.5px;line-height:7px"><div style="width:45px;text-align:center">M</div></div>
<div style="left:699px;top:104px;width:1px;height:5px;background:#c8c8c8"></div>
<div style="left:699px;top:109px;width:16px;height:393px;background:#fff"></div>
<div style="left:699px;top:102px;width:16px;height:7px;background:#e6e6e6"></div>
<div style="left:0px;top:109px;width:12px;height:381px;background:#e6e6e6"></div>
<div style="left:12px;top:109px;width:687px;height:381px;background:#fff"></div>
<div style="left:12px;top:109px;width:687px;height:7px;background:#d9d9d9"></div>
<div style="left:11px;top:109px;width:1px;height:381px;background:#c8c8c8"></div>
<div style="left:0px;top:116px;width:12px;height:1px;background:#d4d4d4"></div>
<div class="t" style="left:0px;top:108.7px;color:#333;font-size:6.3px;line-height:7px;transform:scaleX(.9);transform-origin:50% 0"><div style="width:11px;text-align:center">1</div></div>
<div style="left:0px;top:123px;width:12px;height:1px;background:#d4d4d4"></div>
<div class="t" style="left:0px;top:115.7px;color:#333;font-size:6.3px;line-height:7px;transform:scaleX(.9);transform-origin:50% 0"><div style="width:11px;text-align:center">2</div></div>
<div style="left:0px;top:133px;width:12px;height:1px;background:#d4d4d4"></div>
<div class="t" style="left:0px;top:125.7px;color:#333;font-size:6.3px;line-height:7px;transform:scaleX(.9);transform-origin:50% 0"><div style="width:11px;text-align:center">3</div></div>
<div style="left:0px;top:143px;width:12px;height:1px;background:#d4d4d4"></div>
<div class="t" style="left:0px;top:135.7px;color:#333;font-size:6.3px;line-height:7px;transform:scaleX(.9);transform-origin:50% 0"><div style="width:11px;text-align:center">4</div></div>
<div style="left:0px;top:150px;width:12px;height:1px;background:#d4d4d4"></div>
<div class="t" style="left:0px;top:142.7px;color:#333;font-size:6.3px;line-height:7px;transform:scaleX(.9);transform-origin:50% 0"><div style="width:11px;text-align:center">5</div></div>
<div style="left:0px;top:157px;width:12px;height:1px;background:#d4d4d4"></div>
<div class="t" style="left:0px;top:149.7px;color:#333;font-size:6.3px;line-height:7px;transform:scaleX(.9);transform-origin:50% 0"><div style="width:11px;text-align:center">6</div></div>
<div style="left:0px;top:170px;width:12px;height:1px;background:#d4d4d4"></div>
<div class="t" style="left:0px;top:162.7px;color:#333;font-size:6.3px;line-height:7px;transform:scaleX(.9);transform-origin:50% 0"><div style="width:11px;text-align:center">7</div></div>
<div style="left:0px;top:177px;width:12px;height:1px;background:#d4d4d4"></div>
<div class="t" style="left:0px;top:169.7px;color:#333;font-size:6.3px;line-height:7px;transform:scaleX(.9);transform-origin:50% 0"><div style="width:11px;text-align:center">8</div></div>
<div style="left:0px;top:185px;width:12px;height:1px;background:#d4d4d4"></div>
<div class="t" style="left:0px;top:177.7px;color:#333;font-size:6.3px;line-height:7px;transform:scaleX(.9);transform-origin:50% 0"><div style="width:11px;text-align:center">9</div></div>
<div style="left:0px;top:192px;width:12px;height:1px;background:#d4d4d4"></div>
<div class="t" style="left:0px;top:184.7px;color:#333;font-size:6.3px;line-height:7px;transform:scaleX(.9);transform-origin:50% 0"><div style="width:11px;text-align:center">10</div></div>
<div style="left:0px;top:199px;width:12px;height:1px;background:#d4d4d4"></div>
<div class="t" style="left:0px;top:191.7px;color:#333;font-size:6.3px;line-height:7px;transform:scaleX(.9);transform-origin:50% 0"><div style="width:11px;text-align:center">11</div></div>
<div style="left:0px;top:207px;width:12px;height:1px;background:#d4d4d4"></div>
<div class="t" style="left:0px;top:199.7px;color:#333;font-size:6.3px;line-height:7px;transform:scaleX(.9);transform-origin:50% 0"><div style="width:11px;text-align:center">12</div></div>
<div style="left:0px;top:214px;width:12px;height:1px;background:#d4d4d4"></div>
<div class="t" style="left:0px;top:206.7px;color:#333;font-size:6.3px;line-height:7px;transform:scaleX(.9);transform-origin:50% 0"><div style="width:11px;text-align:center">13</div></div>
<div style="left:0px;top:222px;width:12px;height:1px;background:#d4d4d4"></div>
<div class="t" style="left:0px;top:214.7px;color:#333;font-size:6.3px;line-height:7px;transform:scaleX(.9);transform-origin:50% 0"><div style="width:11px;text-align:center">14</div></div>
<div style="left:0px;top:229px;width:12px;height:1px;background:#d4d4d4"></div>
<div class="t" style="left:0px;top:221.7px;color:#333;font-size:6.3px;line-height:7px;transform:scaleX(.9);transform-origin:50% 0"><div style="width:11px;text-align:center">15</div></div>
<div style="left:0px;top:237px;width:12px;height:1px;background:#d4d4d4"></div>
<div class="t" style="left:0px;top:229.7px;color:#333;font-size:6.3px;line-height:7px;transform:scaleX(.9);transform-origin:50% 0"><div style="width:11px;text-align:center">16</div></div>
<div style="left:0px;top:243px;width:12px;height:1px;background:#d4d4d4"></div>
<div class="t" style="left:0px;top:235.7px;color:#333;font-size:6.3px;line-height:7px;transform:scaleX(.9);transform-origin:50% 0"><div style="width:11px;text-align:center">17</div></div>
<div style="left:0px;top:250px;width:12px;height:1px;background:#d4d4d4"></div>
<div class="t" style="left:0px;top:242.7px;color:#333;font-size:6.3px;line-height:7px;transform:scaleX(.9);transform-origin:50% 0"><div style="width:11px;text-align:center">18</div></div>
<div style="left:0px;top:257px;width:12px;height:1px;background:#d4d4d4"></div>
<div class="t" style="left:0px;top:249.7px;color:#333;font-size:6.3px;line-height:7px;transform:scaleX(.9);transform-origin:50% 0"><div style="width:11px;text-align:center">19</div></div>
<div style="left:0px;top:292px;width:12px;height:1px;background:#d4d4d4"></div>
<div class="t" style="left:0px;top:284.7px;color:#333;font-size:6.3px;line-height:7px;transform:scaleX(.9);transform-origin:50% 0"><div style="width:11px;text-align:center">20</div></div>
<div style="left:0px;top:327px;width:12px;height:1px;background:#d4d4d4"></div>
<div class="t" style="left:0px;top:319.7px;color:#333;font-size:6.3px;line-height:7px;transform:scaleX(.9);transform-origin:50% 0"><div style="width:11px;text-align:center">21</div></div>
<div style="left:0px;top:362px;width:12px;height:1px;background:#d4d4d4"></div>
<div class="t" style="left:0px;top:354.7px;color:#333;font-size:6.3px;line-height:7px;transform:scaleX(.9);transform-origin:50% 0"><div style="width:11px;text-align:center">22</div></div>
<div style="left:0px;top:396px;width:12px;height:1px;background:#d4d4d4"></div>
<div class="t" style="left:0px;top:388.7px;color:#333;font-size:6.3px;line-height:7px;transform:scaleX(.9);transform-origin:50% 0"><div style="width:11px;text-align:center">23</div></div>
<div style="left:0px;top:431px;width:12px;height:1px;background:#d4d4d4"></div>
<div class="t" style="left:0px;top:423.7px;color:#333;font-size:6.3px;line-height:7px;transform:scaleX(.9);transform-origin:50% 0"><div style="width:11px;text-align:center">24</div></div>
<div style="left:0px;top:466px;width:12px;height:1px;background:#d4d4d4"></div>
<div class="t" style="left:0px;top:458.7px;color:#333;font-size:6.3px;line-height:7px;transform:scaleX(.9);transform-origin:50% 0"><div style="width:11px;text-align:center">25</div></div>
<div style="left:12px;top:109px;width:46px;height:7px;border:1.5px solid #1e7145;box-sizing:border-box"></div>
<div style="left:56px;top:114px;width:3px;height:3px;background:#217346"></div>
<div style="left:12px;top:123px;width:46px;height:10px;background:#0070c0"></div>
<div class="t" style="left:13.5px;top:125.5px;color:#fff;font-weight:bold;font-size:6.2px;line-height:7px;transform:scaleX(.92);transform-origin:0 0;">AGENCIA</div>
<div style="left:12px;top:133px;width:46px;height:10px;background:#0070c0"></div>
<div class="t" style="left:13.5px;top:135.5px;color:#fff;font-weight:bold;font-size:6.2px;line-height:7px;transform:scaleX(.92);transform-origin:0 0;">R.F.C.:</div>
<div style="left:12px;top:143px;width:46px;height:7px;background:#0070c0"></div>
<div class="t" style="left:13.5px;top:142.5px;color:#fff;font-weight:bold;font-size:6.2px;line-height:7px;transform:scaleX(.92);transform-origin:0 0;">TELEFONO</div>
<div style="left:12px;top:150px;width:46px;height:7px;background:#0070c0"></div>
<div class="t" style="left:13.5px;top:149.5px;color:#fff;font-weight:bold;font-size:6.2px;line-height:7px;transform:scaleX(.92);transform-origin:0 0;">DIRECCION</div>
<div style="left:12px;top:123px;width:185px;height:35px;border:1px solid #111;box-sizing:border-box"></div>
<div style="left:12px;top:133px;width:185px;height:1px;background:#111"></div>
<div style="left:12px;top:143px;width:185px;height:1px;background:#111"></div>
<div style="left:12px;top:150px;width:185px;height:1px;background:#111"></div>
<div style="left:58px;top:123px;width:1px;height:35px;background:#111"></div>
<div class="t" style="left:60px;top:127px;color:#000;font-weight:bold;font-size:5.8px;line-height:7px;transform:scaleX(.92);transform-origin:0 0;">Agencia</div>
<div style="left:60px;top:135px;width:70px;height:23px;overflow:hidden"><div style="left:0px;top:0px;width:5px;height:5px;background:rgb(185,185,185)"></div><div style="left:5px;top:0px;width:5px;height:5px;background:rgb(174,174,174)"></div><div style="left:10px;top:0px;width:5px;height:5px;background:rgb(190,190,190)"></div><div style="left:15px;top:0px;width:5px;height:5px;background:rgb(168,168,168)"></div><div style="left:20px;top:0px;width:5px;height:5px;background:rgb(169,169,169)"></div><div style="left:25px;top:0px;width:5px;height:5px;background:rgb(199,199,199)"></div><div style="left:30px;top:0px;width:5px;height:5px;background:rgb(171,171,171)"></div><div style="left:35px;top:0px;width:5px;height:5px;background:rgb(188,188,188)"></div><div style="left:40px;top:0px;width:5px;height:5px;background:rgb(168,168,168)"></div><div style="left:45px;top:0px;width:5px;height:5px;background:rgb(197,197,197)"></div><div style="left:50px;top:0px;width:5px;height:5px;background:rgb(203,203,203)"></div><div style="left:0px;top:5px;width:5px;height:5px;background:rgb(162,162,162)"></div><div style="left:5px;top:5px;width:5px;height:5px;background:rgb(165,165,165)"></div><div style="left:10px;top:5px;width:5px;height:5px;background:rgb(187,187,187)"></div><div style="left:15px;top:5px;width:5px;height:5px;background:rgb(186,186,186)"></div><div style="left:20px;top:5px;width:5px;height:5px;background:rgb(164,164,164)"></div><div style="left:25px;top:5px;width:5px;height:5px;background:rgb(175,175,175)"></div><div style="left:30px;top:5px;width:5px;height:5px;background:rgb(165,165,165)"></div><div style="left:35px;top:5px;width:5px;height:5px;background:rgb(195,195,195)"></div><div style="left:40px;top:5px;width:5px;height:5px;background:rgb(187,187,187)"></div><div style="left:45px;top:5px;width:5px;height:5px;background:rgb(163,163,163)"></div><div style="left:50px;top:5px;width:5px;height:5px;background:rgb(192,192,192)"></div><div style="left:0px;top:10px;width:5px;height:5px;background:rgb(189,189,189)"></div><div style="left:5px;top:10px;width:5px;height:5px;background:rgb(215,215,215)"></div><div style="left:10px;top:10px;width:5px;height:5px;background:rgb(215,215,215)"></div><div style="left:15px;top:10px;width:5px;height:5px;background:rgb(212,212,212)"></div><div style="left:20px;top:10px;width:5px;height:5px;background:rgb(178,178,178)"></div><div style="left:25px;top:10px;width:5px;height:5px;background:rgb(211,211,211)"></div><div style="left:30px;top:10px;width:5px;height:5px;background:rgb(212,212,212)"></div><div style="left:35px;top:10px;width:5px;height:5px;background:rgb(200,200,200)"></div><div style="left:40px;top:10px;width:5px;height:5px;background:rgb(178,178,178)"></div><div style="left:45px;top:10px;width:5px;height:5px;background:rgb(189,189,189)"></div><div style="left:50px;top:10px;width:5px;height:5px;background:rgb(202,202,202)"></div><div style="left:0px;top:15px;width:5px;height:5px;background:rgb(205,205,205)"></div><div style="left:5px;top:15px;width:5px;height:5px;background:rgb(178,178,178)"></div><div style="left:10px;top:15px;width:5px;height:5px;background:rgb(188,188,188)"></div><div style="left:15px;top:15px;width:5px;height:5px;background:rgb(196,196,196)"></div><div style="left:20px;top:15px;width:5px;height:5px;background:rgb(179,179,179)"></div><div style="left:25px;top:15px;width:5px;height:5px;background:rgb(204,204,204)"></div><div style="left:30px;top:15px;width:5px;height:5px;background:rgb(177,177,177)"></div><div style="left:35px;top:15px;width:5px;height:5px;background:rgb(189,189,189)"></div><div style="left:40px;top:15px;width:5px;height:5px;background:rgb(230,230,230)"></div><div style="left:0px;top:20px;width:5px;height:3px;background:rgb(186,186,186)"></div><div style="left:5px;top:20px;width:5px;height:3px;background:rgb(181,181,181)"></div><div style="left:10px;top:20px;width:5px;height:3px;background:rgb(165,165,165)"></div><div style="left:15px;top:20px;width:5px;height:3px;background:rgb(163,163,163)"></div><div style="left:20px;top:20px;width:5px;height:3px;background:rgb(178,178,178)"></div><div style="left:25px;top:20px;width:5px;height:3px;background:rgb(203,203,203)"></div></div>
<div style="left:12px;top:169.7px;width:687px;height:1.3px;background:#333"></div>
<div class="t" style="left:199px;top:126.8px;color:#000;font-weight:bold;font-size:5.8px;line-height:7px;transform:scaleX(.92);transform-origin:0 0;">REGION</div>
<div class="t" style="left:199px;top:136.5px;color:#000;font-weight:bold;font-size:5.8px;line-height:7px;transform:scaleX(.92);transform-origin:0 0;">CONTRATO</div>
<div class="t" style="left:199px;top:143.5px;color:#000;font-weight:bold;font-size:5.8px;line-height:7px;transform:scaleX(.92);transform-origin:0 0;">TIPO DE FACTURACIÓN</div>
<div class="t" style="left:266px;top:126.8px;color:#000;font-size:5.8px;line-height:7px;transform:scaleX(.92);transform-origin:0 0;">REGION 9</div>
<div class="t" style="left:266px;top:136.5px;color:#000;font-size:5.8px;line-height:7px;transform:scaleX(.92);transform-origin:0 0;">2582-2024_FDRC_LOC_DF_R9</div>
<div class="t" style="left:266px;top:143.5px;color:#000;font-size:5.8px;line-height:7px;transform:scaleX(.92);transform-origin:0 0;">DIRECTA</div>
<div style="left:318px;top:143px;width:1px;height:14px;background:#e0e0e0"></div>
<div style="left:351px;top:143px;width:1px;height:14px;background:#e0e0e0"></div>
<div style="left:264px;top:150px;width:87px;height:1px;background:#e0e0e0"></div>
<div style="left:262px;top:134px;width:87px;height:12px;border:2px solid #22dd22;box-sizing:border-box"></div>
<div class="t" style="left:386px;top:126.5px;color:#000;font-weight:bold;font-size:5.8px;line-height:7px;transform:scaleX(.92);transform-origin:0 0;">NUMERO PED CLIENTE</div>
<div class="t" style="left:386px;top:136.5px;color:#000;font-weight:bold;font-size:5.8px;line-height:7px;transform:scaleX(.92);transform-origin:0 0;">DIVISIÓN</div>
<div class="t" style="left:386px;top:143.5px;color:#000;font-weight:bold;font-size:5.8px;line-height:7px;transform:scaleX(.92);transform-origin:0 0;">CONDICIÓN DE PAGO</div>
<div class="t" style="left:452px;top:126.5px;color:#000;font-size:5.8px;line-height:7px;transform:scaleX(.92);transform-origin:0 0;">PSPOPT027</div>
<div class="t" style="left:452px;top:143.5px;color:#000;font-size:5.8px;line-height:7px;transform:scaleX(.92);transform-origin:0 0;">CONTADO</div>
<div style="left:499px;top:123px;width:134px;height:11px;border:1px solid #111;border-right:0;box-sizing:border-box"></div>
<div style="left:606px;top:123px;width:1px;height:21px;background:#111"></div>
<div style="left:606px;top:143px;width:27px;height:1px;background:#111"></div>
<div style="left:606px;top:123px;width:93px;height:1px;background:#111"></div>
<div class="t" style="left:511.90px;top:124px;color:#000;font-weight:bold;font-size:8.5px;line-height:10px;transform:scaleX(0.9380);transform-origin:0 0;"><span id="m54">NUMERO DE ORDEN:</span></div>
<div class="t" style="left:627.5px;top:124px;color:#000;font-weight:bold;font-size:9px;line-height:10px;font-family:'Liberation Serif',serif">1</div>
<div style="left:12px;top:177px;width:46px;height:8px;background:#0070c0"></div>
<div class="t" style="left:13.5px;top:177.5px;color:#fff;font-weight:bold;font-size:6.2px;line-height:7px;transform:scaleX(.92);transform-origin:0 0;">DIRIGIDO A:</div>
<div style="left:12px;top:185px;width:46px;height:7px;background:#0070c0"></div>
<div class="t" style="left:13.5px;top:184.5px;color:#fff;font-weight:bold;font-size:6.2px;line-height:7px;transform:scaleX(.92);transform-origin:0 0;">DIRECCION</div>
<div style="left:12px;top:192px;width:46px;height:7px;background:#0070c0"></div>
<div class="t" style="left:13.5px;top:191.5px;color:#fff;font-weight:bold;font-size:6.2px;line-height:7px;transform:scaleX(.92);transform-origin:0 0;">R.F.C.:</div>
<div style="left:12px;top:199px;width:46px;height:8px;background:#0070c0"></div>
<div class="t" style="left:13.5px;top:199.5px;color:#fff;font-weight:bold;font-size:6.2px;line-height:7px;transform:scaleX(.92);transform-origin:0 0;">TELEFONO</div>
<div style="left:12px;top:177px;width:185px;height:30px;border:1px solid #111;box-sizing:border-box"></div>
<div style="left:12px;top:185px;width:185px;height:1px;background:#111"></div>
<div style="left:12px;top:192px;width:185px;height:1px;background:#111"></div>
<div style="left:12px;top:199px;width:185px;height:1px;background:#111"></div>
<div style="left:58px;top:177px;width:1px;height:30px;background:#111"></div>
<div style="left:60px;top:178px;width:70px;height:28px;overflow:hidden"><div style="left:0px;top:0px;width:5px;height:5px;background:rgb(187,187,187)"></div><div style="left:5px;top:0px;width:5px;height:5px;background:rgb(198,198,198)"></div><div style="left:10px;top:0px;width:5px;height:5px;background:rgb(181,181,181)"></div><div style="left:15px;top:0px;width:5px;height:5px;background:rgb(210,210,210)"></div><div style="left:20px;top:0px;width:5px;height:5px;background:rgb(179,179,179)"></div><div style="left:25px;top:0px;width:5px;height:5px;background:rgb(178,178,178)"></div><div style="left:30px;top:0px;width:5px;height:5px;background:rgb(188,188,188)"></div><div style="left:35px;top:0px;width:5px;height:5px;background:rgb(206,206,206)"></div><div style="left:40px;top:0px;width:5px;height:5px;background:rgb(209,209,209)"></div><div style="left:45px;top:0px;width:5px;height:5px;background:rgb(227,227,227)"></div><div style="left:0px;top:5px;width:5px;height:5px;background:rgb(189,189,189)"></div><div style="left:5px;top:5px;width:5px;height:5px;background:rgb(175,175,175)"></div><div style="left:10px;top:5px;width:5px;height:5px;background:rgb(179,179,179)"></div><div style="left:15px;top:5px;width:5px;height:5px;background:rgb(183,183,183)"></div><div style="left:20px;top:5px;width:5px;height:5px;background:rgb(194,194,194)"></div><div style="left:25px;top:5px;width:5px;height:5px;background:rgb(179,179,179)"></div><div style="left:30px;top:5px;width:5px;height:5px;background:rgb(176,176,176)"></div><div style="left:35px;top:5px;width:5px;height:5px;background:rgb(174,174,174)"></div><div style="left:40px;top:5px;width:5px;height:5px;background:rgb(172,172,172)"></div><div style="left:45px;top:5px;width:5px;height:5px;background:rgb(215,215,215)"></div><div style="left:0px;top:10px;width:5px;height:5px;background:rgb(176,176,176)"></div><div style="left:5px;top:10px;width:5px;height:5px;background:rgb(180,180,180)"></div><div style="left:10px;top:10px;width:5px;height:5px;background:rgb(170,170,170)"></div><div style="left:15px;top:10px;width:5px;height:5px;background:rgb(184,184,184)"></div><div style="left:20px;top:10px;width:5px;height:5px;background:rgb(198,198,198)"></div><div style="left:25px;top:10px;width:5px;height:5px;background:rgb(196,196,196)"></div><div style="left:30px;top:10px;width:5px;height:5px;background:rgb(186,186,186)"></div><div style="left:35px;top:10px;width:5px;height:5px;background:rgb(193,193,193)"></div><div style="left:40px;top:10px;width:5px;height:5px;background:rgb(183,183,183)"></div><div style="left:45px;top:10px;width:5px;height:5px;background:rgb(194,194,194)"></div><div style="left:0px;top:15px;width:5px;height:5px;background:rgb(177,177,177)"></div><div style="left:5px;top:15px;width:5px;height:5px;background:rgb(202,202,202)"></div><div style="left:10px;top:15px;width:5px;height:5px;background:rgb(196,196,196)"></div><div style="left:15px;top:15px;width:5px;height:5px;background:rgb(180,180,180)"></div><div style="left:20px;top:15px;width:5px;height:5px;background:rgb(191,191,191)"></div><div style="left:25px;top:15px;width:5px;height:5px;background:rgb(179,179,179)"></div><div style="left:30px;top:15px;width:5px;height:5px;background:rgb(201,201,201)"></div><div style="left:35px;top:15px;width:5px;height:5px;background:rgb(196,196,196)"></div><div style="left:40px;top:15px;width:5px;height:5px;background:rgb(172,172,172)"></div><div style="left:45px;top:15px;width:5px;height:5px;background:rgb(199,199,199)"></div><div style="left:0px;top:20px;width:5px;height:5px;background:rgb(210,210,210)"></div><div style="left:5px;top:20px;width:5px;height:5px;background:rgb(195,195,195)"></div><div style="left:10px;top:20px;width:5px;height:5px;background:rgb(196,196,196)"></div><div style="left:15px;top:20px;width:5px;height:5px;background:rgb(197,197,197)"></div><div style="left:20px;top:20px;width:5px;height:5px;background:rgb(206,206,206)"></div><div style="left:25px;top:20px;width:5px;height:5px;background:rgb(204,204,204)"></div><div style="left:30px;top:20px;width:5px;height:5px;background:rgb(179,179,179)"></div><div style="left:35px;top:20px;width:5px;height:5px;background:rgb(180,180,180)"></div><div style="left:40px;top:20px;width:5px;height:5px;background:rgb(192,192,192)"></div><div style="left:45px;top:20px;width:5px;height:5px;background:rgb(230,230,230)"></div><div style="left:0px;top:25px;width:5px;height:3px;background:rgb(207,207,207)"></div><div style="left:5px;top:25px;width:5px;height:3px;background:rgb(206,206,206)"></div><div style="left:10px;top:25px;width:5px;height:3px;background:rgb(187,187,187)"></div><div style="left:15px;top:25px;width:5px;height:3px;background:rgb(186,186,186)"></div><div style="left:20px;top:25px;width:5px;height:3px;background:rgb(208,208,208)"></div><div style="left:25px;top:25px;width:5px;height:3px;background:rgb(207,207,207)"></div><div style="left:30px;top:25px;width:5px;height:3px;background:rgb(194,194,194)"></div><div style="left:35px;top:25px;width:5px;height:3px;background:rgb(205,205,205)"></div><div style="left:40px;top:25px;width:5px;height:3px;background:rgb(228,228,228)"></div></div>
<div style="left:264px;top:177px;width:54px;height:8px;background:#0070c0"></div>
<div class="t" style="left:265.5px;top:177.5px;color:#fff;font-weight:bold;font-size:6.2px;line-height:7px;transform:scaleX(.92);transform-origin:0 0;">PERIODO</div>
<div style="left:264px;top:185px;width:54px;height:7px;background:#0070c0"></div>
<div class="t" style="left:265.5px;top:184.5px;color:#fff;font-weight:bold;font-size:6.2px;line-height:7px;transform:scaleX(.92);transform-origin:0 0;">JOBNOMBER</div>
<div style="left:264px;top:192px;width:54px;height:7px;background:#0070c0"></div>
<div class="t" style="left:265.5px;top:191.5px;color:#fff;font-weight:bold;font-size:6.2px;line-height:7px;transform:scaleX(.92);transform-origin:0 0;">CAMPAÑA:</div>
<div style="left:264px;top:199px;width:54px;height:8px;background:#0070c0"></div>
<div class="t" style="left:265.5px;top:199.5px;color:#fff;font-weight:bold;font-size:6.2px;line-height:7px;transform:scaleX(.92);transform-origin:0 0;">PRODUCTO</div>
<div style="left:264px;top:207px;width:54px;height:7px;background:#0070c0"></div>
<div class="t" style="left:265.5px;top:206.5px;color:#fff;font-weight:bold;font-size:6.2px;line-height:7px;transform:scaleX(.92);transform-origin:0 0;">TIPO DE MEDIO</div>
<div style="left:264px;top:177px;width:186px;height:38px;border:1px solid #111;box-sizing:border-box"></div>
<div style="left:264px;top:185px;width:186px;height:1px;background:#111"></div>
<div style="left:264px;top:192px;width:186px;height:1px;background:#111"></div>
<div style="left:264px;top:199px;width:186px;height:1px;background:#111"></div>
<div style="left:264px;top:207px;width:186px;height:1px;background:#111"></div>
<div style="left:318px;top:177px;width:1px;height:38px;background:#111"></div>
<div class="t" style="left:320px;top:179.5px;color:#000;font-weight:bold;font-size:5.8px;line-height:7px;transform:scaleX(.92);transform-origin:0 0;">ene-24</div>
<div style="left:320px;top:184px;width:70px;height:29px;overflow:hidden"><div style="left:0px;top:0px;width:5px;height:3px;background:rgb(196,196,196)"></div><div style="left:5px;top:0px;width:5px;height:3px;background:rgb(189,189,189)"></div><div style="left:10px;top:0px;width:5px;height:3px;background:rgb(184,184,184)"></div><div style="left:15px;top:0px;width:5px;height:3px;background:rgb(197,197,197)"></div><div style="left:20px;top:0px;width:5px;height:3px;background:rgb(187,187,187)"></div><div style="left:25px;top:0px;width:5px;height:3px;background:rgb(196,196,196)"></div><div style="left:30px;top:0px;width:5px;height:3px;background:rgb(186,186,186)"></div><div style="left:35px;top:0px;width:5px;height:3px;background:rgb(175,175,175)"></div><div style="left:40px;top:0px;width:5px;height:3px;background:rgb(189,189,189)"></div><div style="left:45px;top:0px;width:5px;height:3px;background:rgb(186,186,186)"></div><div style="left:50px;top:0px;width:5px;height:3px;background:rgb(180,180,180)"></div><div style="left:55px;top:0px;width:5px;height:3px;background:rgb(194,194,194)"></div><div style="left:60px;top:0px;width:5px;height:3px;background:rgb(178,178,178)"></div><div style="left:65px;top:0px;width:5px;height:3px;background:rgb(215,215,215)"></div><div style="left:0px;top:3px;width:5px;height:5px;background:rgb(163,163,163)"></div><div style="left:5px;top:3px;width:5px;height:5px;background:rgb(173,173,173)"></div><div style="left:10px;top:3px;width:5px;height:5px;background:rgb(178,178,178)"></div><div style="left:15px;top:3px;width:5px;height:5px;background:rgb(168,168,168)"></div><div style="left:20px;top:3px;width:5px;height:5px;background:rgb(175,175,175)"></div><div style="left:25px;top:3px;width:5px;height:5px;background:rgb(185,185,185)"></div><div style="left:30px;top:3px;width:5px;height:5px;background:rgb(185,185,185)"></div><div style="left:35px;top:3px;width:5px;height:5px;background:rgb(191,191,191)"></div><div style="left:40px;top:3px;width:5px;height:5px;background:rgb(190,190,190)"></div><div style="left:0px;top:8px;width:5px;height:5px;background:rgb(170,170,170)"></div><div style="left:5px;top:8px;width:5px;height:5px;background:rgb(188,188,188)"></div><div style="left:10px;top:8px;width:5px;height:5px;background:rgb(185,185,185)"></div><div style="left:15px;top:8px;width:5px;height:5px;background:rgb(195,195,195)"></div><div style="left:20px;top:8px;width:5px;height:5px;background:rgb(177,177,177)"></div><div style="left:25px;top:8px;width:5px;height:5px;background:rgb(168,168,168)"></div><div style="left:30px;top:8px;width:5px;height:5px;background:rgb(187,187,187)"></div><div style="left:35px;top:8px;width:5px;height:5px;background:rgb(195,195,195)"></div><div style="left:40px;top:8px;width:5px;height:5px;background:rgb(177,177,177)"></div><div style="left:45px;top:8px;width:5px;height:5px;background:rgb(186,186,186)"></div><div style="left:50px;top:8px;width:5px;height:5px;background:rgb(182,182,182)"></div><div style="left:55px;top:8px;width:5px;height:5px;background:rgb(184,184,184)"></div><div style="left:60px;top:8px;width:5px;height:5px;background:rgb(174,174,174)"></div><div style="left:65px;top:8px;width:5px;height:5px;background:rgb(194,194,194)"></div><div style="left:0px;top:13px;width:5px;height:5px;background:rgb(170,170,170)"></div><div style="left:5px;top:13px;width:5px;height:5px;background:rgb(176,176,176)"></div><div style="left:10px;top:13px;width:5px;height:5px;background:rgb(174,174,174)"></div><div style="left:15px;top:13px;width:5px;height:5px;background:rgb(179,179,179)"></div><div style="left:20px;top:13px;width:5px;height:5px;background:rgb(179,179,179)"></div><div style="left:25px;top:13px;width:5px;height:5px;background:rgb(165,165,165)"></div><div style="left:30px;top:13px;width:5px;height:5px;background:rgb(196,196,196)"></div><div style="left:35px;top:13px;width:5px;height:5px;background:rgb(176,176,176)"></div><div style="left:40px;top:13px;width:5px;height:5px;background:rgb(181,181,181)"></div><div style="left:45px;top:13px;width:5px;height:5px;background:rgb(183,183,183)"></div><div style="left:50px;top:13px;width:5px;height:5px;background:rgb(165,165,165)"></div><div style="left:55px;top:13px;width:5px;height:5px;background:rgb(174,174,174)"></div><div style="left:60px;top:13px;width:5px;height:5px;background:rgb(191,191,191)"></div><div style="left:65px;top:13px;width:5px;height:5px;background:rgb(224,224,224)"></div><div style="left:0px;top:18px;width:5px;height:5px;background:rgb(193,193,193)"></div><div style="left:5px;top:18px;width:5px;height:5px;background:rgb(190,190,190)"></div><div style="left:10px;top:18px;width:5px;height:5px;background:rgb(178,178,178)"></div><div style="left:15px;top:18px;width:5px;height:5px;background:rgb(202,202,202)"></div><div style="left:20px;top:18px;width:5px;height:5px;background:rgb(173,173,173)"></div><div style="left:25px;top:18px;width:5px;height:5px;background:rgb(199,199,199)"></div><div style="left:30px;top:18px;width:5px;height:5px;background:rgb(205,205,205)"></div><div style="left:35px;top:18px;width:5px;height:5px;background:rgb(195,195,195)"></div><div style="left:40px;top:18px;width:5px;height:5px;background:rgb(195,195,195)"></div><div style="left:45px;top:18px;width:5px;height:5px;background:rgb(195,195,195)"></div><div style="left:50px;top:18px;width:5px;height:5px;background:rgb(220,220,220)"></div><div style="left:0px;top:23px;width:5px;height:5px;background:rgb(181,181,181)"></div><div style="left:5px;top:23px;width:5px;height:5px;background:rgb(205,205,205)"></div><div style="left:10px;top:23px;width:5px;height:5px;background:rgb(215,215,215)"></div><div style="left:15px;top:23px;width:5px;height:5px;background:rgb(200,200,200)"></div><div style="left:20px;top:23px;width:5px;height:5px;background:rgb(178,178,178)"></div><div style="left:25px;top:23px;width:5px;height:5px;background:rgb(187,187,187)"></div><div style="left:30px;top:23px;width:5px;height:5px;background:rgb(179,179,179)"></div><div style="left:35px;top:23px;width:5px;height:5px;background:rgb(188,188,188)"></div><div style="left:40px;top:23px;width:5px;height:5px;background:rgb(203,203,203)"></div><div style="left:45px;top:23px;width:5px;height:5px;background:rgb(185,185,185)"></div><div style="left:50px;top:23px;width:5px;height:5px;background:rgb(182,182,182)"></div><div style="left:55px;top:23px;width:5px;height:5px;background:rgb(196,196,196)"></div><div style="left:60px;top:23px;width:5px;height:5px;background:rgb(213,213,213)"></div><div style="left:65px;top:23px;width:5px;height:5px;background:rgb(203,203,203)"></div><div style="left:0px;top:28px;width:5px;height:1px;background:rgb(193,193,193)"></div><div style="left:5px;top:28px;width:5px;height:1px;background:rgb(190,190,190)"></div><div style="left:10px;top:28px;width:5px;height:1px;background:rgb(208,208,208)"></div><div style="left:15px;top:28px;width:5px;height:1px;background:rgb(194,194,194)"></div><div style="left:20px;top:28px;width:5px;height:1px;background:rgb(207,207,207)"></div><div style="left:25px;top:28px;width:5px;height:1px;background:rgb(193,193,193)"></div><div style="left:30px;top:28px;width:5px;height:1px;background:rgb(201,201,201)"></div><div style="left:35px;top:28px;width:5px;height:1px;background:rgb(209,209,209)"></div><div style="left:40px;top:28px;width:5px;height:1px;background:rgb(215,215,215)"></div></div>
<div style="left:499px;top:177px;width:58px;height:8px;background:#0070c0"></div>
<div class="t" style="left:500.5px;top:177.5px;color:#fff;font-weight:bold;font-size:6.2px;line-height:7px;transform:scaleX(.92);transform-origin:0 0;">PLAN Nº:</div>
<div style="left:499px;top:185px;width:58px;height:7px;background:#0070c0"></div>
<div class="t" style="left:500.5px;top:184.5px;color:#fff;font-weight:bold;font-size:6.2px;line-height:7px;transform:scaleX(.92);transform-origin:0 0;">CLIENTE</div>
<div style="left:499px;top:192px;width:58px;height:7px;background:#0070c0"></div>
<div class="t" style="left:500.5px;top:191.5px;color:#fff;font-weight:bold;font-size:6.2px;line-height:7px;transform:scaleX(.92);transform-origin:0 0;">DOMICILIO</div>
<div style="left:499px;top:199px;width:58px;height:8px;background:#0070c0"></div>
<div class="t" style="left:500.5px;top:199.5px;color:#fff;font-weight:bold;font-size:6.2px;line-height:7px;transform:scaleX(.92);transform-origin:0 0;">R.F.C.:</div>
<div style="left:499px;top:207px;width:58px;height:7px;background:#0070c0"></div>
<div class="t" style="left:500.5px;top:206.5px;color:#fff;font-weight:bold;font-size:6.2px;line-height:7px;transform:scaleX(.92);transform-origin:0 0;">MONEDA</div>
<div style="left:499px;top:214px;width:58px;height:8px;background:#0070c0"></div>
<div class="t" style="left:500.5px;top:214.5px;color:#fff;font-weight:bold;font-size:6.2px;line-height:7px;transform:scaleX(.92);transform-origin:0 0;">COTIZACION</div>
<div style="left:499px;top:177px;width:134px;height:46px;border:1px solid #111;border-right:0;box-sizing:border-box"></div>
<div style="left:499px;top:185px;width:134px;height:1px;background:#111"></div>
<div style="left:499px;top:192px;width:134px;height:1px;background:#111"></div>
<div style="left:499px;top:200px;width:134px;height:1px;background:#111"></div>
<div style="left:499px;top:207px;width:134px;height:1px;background:#111"></div>
<div style="left:499px;top:214px;width:134px;height:1px;background:#111"></div>
<div style="left:557px;top:177px;width:1px;height:46px;background:#111"></div>
<div style="left:606px;top:177px;width:27px;height:8px;background:#0070c0"></div>
<div class="t" style="left:607.5px;top:178.5px;color:#fff;font-weight:bold;font-size:6.2px;line-height:7px;transform:scaleX(.92);transform-origin:0 0;">PRESUPU</div>
<div class="t" style="left:558.5px;top:179.5px;color:#000;font-size:5.8px;line-height:7px;transform:scaleX(.92);transform-origin:0 0;">00019796</div>
<div style="left:558px;top:185px;width:70px;height:28px;overflow:hidden"><div style="left:0px;top:0px;width:5px;height:5px;background:rgb(169,169,169)"></div><div style="left:5px;top:0px;width:5px;height:5px;background:rgb(178,178,178)"></div><div style="left:10px;top:0px;width:5px;height:5px;background:rgb(189,189,189)"></div><div style="left:15px;top:0px;width:5px;height:5px;background:rgb(174,174,174)"></div><div style="left:20px;top:0px;width:5px;height:5px;background:rgb(181,181,181)"></div><div style="left:25px;top:0px;width:5px;height:5px;background:rgb(187,187,187)"></div><div style="left:30px;top:0px;width:5px;height:5px;background:rgb(188,188,188)"></div><div style="left:35px;top:0px;width:5px;height:5px;background:rgb(195,195,195)"></div><div style="left:40px;top:0px;width:5px;height:5px;background:rgb(172,172,172)"></div><div style="left:45px;top:0px;width:5px;height:5px;background:rgb(172,172,172)"></div><div style="left:50px;top:0px;width:5px;height:5px;background:rgb(196,196,196)"></div><div style="left:55px;top:0px;width:5px;height:5px;background:rgb(194,194,194)"></div><div style="left:60px;top:0px;width:5px;height:5px;background:rgb(195,195,195)"></div><div style="left:65px;top:0px;width:5px;height:5px;background:rgb(195,195,195)"></div><div style="left:70px;top:0px;width:5px;height:5px;background:rgb(209,209,209)"></div><div style="left:0px;top:5px;width:5px;height:5px;background:rgb(165,165,165)"></div><div style="left:5px;top:5px;width:5px;height:5px;background:rgb(169,169,169)"></div><div style="left:10px;top:5px;width:5px;height:5px;background:rgb(166,166,166)"></div><div style="left:15px;top:5px;width:5px;height:5px;background:rgb(181,181,181)"></div><div style="left:20px;top:5px;width:5px;height:5px;background:rgb(176,176,176)"></div><div style="left:25px;top:5px;width:5px;height:5px;background:rgb(190,190,190)"></div><div style="left:30px;top:5px;width:5px;height:5px;background:rgb(170,170,170)"></div><div style="left:35px;top:5px;width:5px;height:5px;background:rgb(193,193,193)"></div><div style="left:40px;top:5px;width:5px;height:5px;background:rgb(161,161,161)"></div><div style="left:45px;top:5px;width:5px;height:5px;background:rgb(173,173,173)"></div><div style="left:50px;top:5px;width:5px;height:5px;background:rgb(193,193,193)"></div><div style="left:55px;top:5px;width:5px;height:5px;background:rgb(183,183,183)"></div><div style="left:60px;top:5px;width:5px;height:5px;background:rgb(169,169,169)"></div><div style="left:65px;top:5px;width:5px;height:5px;background:rgb(194,194,194)"></div><div style="left:70px;top:5px;width:5px;height:5px;background:rgb(186,186,186)"></div><div style="left:0px;top:10px;width:5px;height:5px;background:rgb(193,193,193)"></div><div style="left:5px;top:10px;width:5px;height:5px;background:rgb(179,179,179)"></div><div style="left:10px;top:10px;width:5px;height:5px;background:rgb(165,165,165)"></div><div style="left:15px;top:10px;width:5px;height:5px;background:rgb(176,176,176)"></div><div style="left:20px;top:10px;width:5px;height:5px;background:rgb(193,193,193)"></div><div style="left:25px;top:10px;width:5px;height:5px;background:rgb(183,183,183)"></div><div style="left:30px;top:10px;width:5px;height:5px;background:rgb(170,170,170)"></div><div style="left:35px;top:10px;width:5px;height:5px;background:rgb(182,182,182)"></div><div style="left:40px;top:10px;width:5px;height:5px;background:rgb(174,174,174)"></div><div style="left:45px;top:10px;width:5px;height:5px;background:rgb(194,194,194)"></div><div style="left:50px;top:10px;width:5px;height:5px;background:rgb(194,194,194)"></div><div style="left:55px;top:10px;width:5px;height:5px;background:rgb(192,192,192)"></div><div style="left:60px;top:10px;width:5px;height:5px;background:rgb(181,181,181)"></div><div style="left:65px;top:10px;width:5px;height:5px;background:rgb(200,200,200)"></div><div style="left:70px;top:10px;width:5px;height:5px;background:rgb(199,199,199)"></div><div style="left:0px;top:15px;width:5px;height:5px;background:rgb(177,177,177)"></div><div style="left:5px;top:15px;width:5px;height:5px;background:rgb(180,180,180)"></div><div style="left:10px;top:15px;width:5px;height:5px;background:rgb(190,190,190)"></div><div style="left:15px;top:15px;width:5px;height:5px;background:rgb(179,179,179)"></div><div style="left:20px;top:15px;width:5px;height:5px;background:rgb(202,202,202)"></div><div style="left:0px;top:20px;width:5px;height:5px;background:rgb(201,201,201)"></div><div style="left:5px;top:20px;width:5px;height:5px;background:rgb(200,200,200)"></div><div style="left:10px;top:20px;width:5px;height:5px;background:rgb(196,196,196)"></div><div style="left:15px;top:20px;width:5px;height:5px;background:rgb(208,208,208)"></div><div style="left:20px;top:20px;width:5px;height:5px;background:rgb(185,185,185)"></div><div style="left:25px;top:20px;width:5px;height:5px;background:rgb(185,185,185)"></div><div style="left:30px;top:20px;width:5px;height:5px;background:rgb(210,210,210)"></div><div style="left:35px;top:20px;width:5px;height:5px;background:rgb(193,193,193)"></div><div style="left:40px;top:20px;width:5px;height:5px;background:rgb(200,200,200)"></div><div style="left:45px;top:20px;width:5px;height:5px;background:rgb(193,193,193)"></div><div style="left:50px;top:20px;width:5px;height:5px;background:rgb(191,191,191)"></div><div style="left:55px;top:20px;width:5px;height:5px;background:rgb(207,207,207)"></div><div style="left:60px;top:20px;width:5px;height:5px;background:rgb(204,204,204)"></div><div style="left:65px;top:20px;width:5px;height:5px;background:rgb(215,215,215)"></div><div style="left:70px;top:20px;width:5px;height:5px;background:rgb(221,221,221)"></div><div style="left:0px;top:25px;width:5px;height:3px;background:rgb(204,204,204)"></div><div style="left:5px;top:25px;width:5px;height:3px;background:rgb(215,215,215)"></div><div style="left:10px;top:25px;width:5px;height:3px;background:rgb(213,213,213)"></div><div style="left:15px;top:25px;width:5px;height:3px;background:rgb(201,201,201)"></div><div style="left:20px;top:25px;width:5px;height:3px;background:rgb(201,201,201)"></div><div style="left:25px;top:25px;width:5px;height:3px;background:rgb(192,192,192)"></div><div style="left:30px;top:25px;width:5px;height:3px;background:rgb(197,197,197)"></div><div style="left:35px;top:25px;width:5px;height:3px;background:rgb(193,193,193)"></div><div style="left:40px;top:25px;width:5px;height:3px;background:rgb(197,197,197)"></div><div style="left:45px;top:25px;width:5px;height:3px;background:rgb(205,205,205)"></div><div style="left:50px;top:25px;width:5px;height:3px;background:rgb(196,196,196)"></div><div style="left:55px;top:25px;width:5px;height:3px;background:rgb(200,200,200)"></div><div style="left:60px;top:25px;width:5px;height:3px;background:rgb(196,196,196)"></div><div style="left:65px;top:25px;width:5px;height:3px;background:rgb(205,205,205)"></div><div style="left:70px;top:25px;width:5px;height:3px;background:rgb(234,234,234)"></div></div>
<div style="left:583px;top:200px;width:50px;height:8px;background:#f4f4f4"></div>
<div style="left:573px;top:207px;width:60px;height:7px;background:#d8d8d8"></div>
<div style="left:12px;top:237px;width:687px;height:20px;background:#0070c0"></div>
<div style="left:12px;top:236.5px;width:687px;height:1px;background:#111"></div>
<div style="left:12px;top:256.5px;width:687px;height:1px;background:#111"></div>
<div class="t" style="left:12px;top:244.3px;color:#fff;font-weight:bold;font-size:6.2px;line-height:6.3px;text-align:center;transform:scaleX(.92);transform-origin:50% 0"><div style="width:46px">Cobertura</div></div>
<div class="t" style="left:58px;top:244.3px;color:#fff;font-weight:bold;font-size:6.2px;line-height:6.3px;text-align:center;transform:scaleX(.92);transform-origin:50% 0"><div style="width:73px">Medio</div></div>
<div class="t" style="left:131px;top:244.3px;color:#fff;font-weight:bold;font-size:6.2px;line-height:6.3px;text-align:center;transform:scaleX(.92);transform-origin:50% 0"><div style="width:66px">Ubicación</div></div>
<div class="t" style="left:197px;top:244.3px;color:#fff;font-weight:bold;font-size:6.2px;line-height:6.3px;text-align:center;transform:scaleX(.92);transform-origin:50% 0"><div style="width:67px">Tipo de Publicacion</div></div>
<div class="t" style="left:264px;top:241.2px;color:#fff;font-weight:bold;font-size:6.2px;line-height:6.3px;text-align:center;transform:scaleX(.92);transform-origin:50% 0"><div style="width:54px">Referencias<br>Materiales</div></div>
<div class="t" style="left:385px;top:241.2px;color:#fff;font-weight:bold;font-size:6.2px;line-height:6.3px;text-align:center;transform:scaleX(.92);transform-origin:50% 0"><div style="width:65px">Costo<br>Ctls x Ctos</div></div>
<div class="t" style="left:450px;top:244.3px;color:#fff;font-weight:bold;font-size:6.2px;line-height:6.3px;text-align:center;transform:scaleX(.92);transform-origin:50% 0"><div style="width:49px">Nº Elementos</div></div>
<div class="t" style="left:499px;top:244.3px;color:#fff;font-weight:bold;font-size:6.2px;line-height:6.3px;text-align:center;transform:scaleX(.92);transform-origin:50% 0"><div style="width:58px">Valor Bruto Unitario</div></div>
<div class="t" style="left:557px;top:244.3px;color:#fff;font-weight:bold;font-size:6.2px;line-height:6.3px;text-align:center;transform:scaleX(.92);transform-origin:50% 0"><div style="width:49px">Dcto%</div></div>
<div class="t" style="left:606px;top:244.3px;color:#fff;font-weight:bold;font-size:6.2px;line-height:6.3px;text-align:center;transform:scaleX(.92);transform-origin:50% 0"><div style="width:48px">Total Neto</div></div>
<div class="t" style="left:654px;top:244.3px;color:#fff;font-weight:bold;font-size:6.2px;line-height:6.3px;text-align:center;transform:scaleX(.92);transform-origin:50% 0"><div style="width:45px"></div></div>
<div class="t" style="left:318px;top:241.2px;color:#fff;font-weight:bold;font-size:6.2px;line-height:6.3px;text-align:center;transform:scaleX(.92);transform-origin:50% 0"><div style="width:67px">Fechas</div></div>
<div style="left:318px;top:251px;width:67px;height:6px;background:#c0c0c0;border-top:1px solid #111;box-sizing:border-box"></div>
<div class="t" style="left:318px;top:251px;color:#000;font-weight:bold;font-size:5.8px;line-height:7px;text-align:center;transform:scaleX(.92);transform-origin:50% 0"><div style="width:33px">Inicio</div></div>
<div class="t" style="left:351px;top:251px;color:#000;font-weight:bold;font-size:5.8px;line-height:7px;text-align:center;transform:scaleX(.92);transform-origin:50% 0"><div style="width:34px">Fin</div></div>
<div style="left:58px;top:237px;width:1px;height:20px;background:#111"></div>
<div style="left:131px;top:237px;width:1px;height:20px;background:#111"></div>
<div style="left:197px;top:237px;width:1px;height:20px;background:#111"></div>
<div style="left:264px;top:237px;width:1px;height:20px;background:#111"></div>
<div style="left:318px;top:237px;width:1px;height:20px;background:#111"></div>
<div style="left:385px;top:237px;width:1px;height:20px;background:#111"></div>
<div style="left:450px;top:237px;width:1px;height:20px;background:#111"></div>
<div style="left:499px;top:237px;width:1px;height:20px;background:#111"></div>
<div style="left:557px;top:237px;width:1px;height:20px;background:#111"></div>
<div style="left:606px;top:237px;width:1px;height:20px;background:#111"></div>
<div style="left:654px;top:237px;width:1px;height:20px;background:#111"></div>
<div style="left:351px;top:251px;width:1px;height:6px;background:#111"></div>
<div style="left:12px;top:292px;width:687px;height:1px;background:#4a4a4a"></div>
<div class="t" style="left:13.7px;top:268.8px;color:#000;font-size:5.8px;line-height:6.3px;transform:scaleX(.92);transform-origin:0 0;">CUERNAVACA,<br>MOR.</div>
<div class="t" style="left:59.5px;top:271.5px;color:#000;font-size:5.8px;line-height:7px;transform:scaleX(.92);transform-origin:0 0;">MUPI</div>
<div class="t" style="left:198.5px;top:271.5px;color:#000;font-size:5.8px;line-height:7px;transform:scaleX(.92);transform-origin:0 0;">MUPI</div>
<div class="t" style="left:265.5px;top:271.5px;color:#000;font-size:5.8px;line-height:7px;transform:scaleX(.92);transform-origin:0 0;">A</div>
<div class="t" style="left:318px;top:271.5px;color:#000;font-size:5.8px;line-height:7px;transform:scaleX(.88);transform-origin:50% 0"><div style="width:33px;text-align:center">01/01/2024</div></div>
<div class="t" style="left:351px;top:271.5px;color:#000;font-size:5.8px;line-height:7px;transform:scaleX(.88);transform-origin:50% 0"><div style="width:34px;text-align:center">08/01/2024</div></div>
<div class="t" style="left:385px;top:271.5px;color:#000;font-size:5.8px;line-height:7px;transform:scaleX(.88);transform-origin:50% 0"><div style="width:65px;text-align:center">$ 2.100,00</div></div>
<div class="t" style="left:450px;top:271.5px;color:#000;font-size:5.8px;line-height:7px;"><div style="width:49px;text-align:center">1</div></div>
<div class="t" style="left:499px;top:271.5px;color:#000;font-size:5.8px;line-height:7px;transform:scaleX(.88);transform-origin:100% 0"><div style="width:57px;text-align:right">$ 2.100,00</div></div>
<div class="t" style="left:629px;top:271.5px;color:#000;font-size:5.8px;line-height:7px">$</div>
<div style="left:132px;top:258px;width:70px;height:34px;overflow:hidden"><div style="left:0px;top:0px;width:5px;height:3px;background:rgb(189,189,189)"></div><div style="left:5px;top:0px;width:5px;height:3px;background:rgb(170,170,170)"></div><div style="left:10px;top:0px;width:5px;height:3px;background:rgb(185,185,185)"></div><div style="left:15px;top:0px;width:5px;height:3px;background:rgb(190,190,190)"></div><div style="left:20px;top:0px;width:5px;height:3px;background:rgb(206,206,206)"></div><div style="left:0px;top:3px;width:5px;height:5px;background:rgb(215,215,215)"></div><div style="left:5px;top:3px;width:5px;height:5px;background:rgb(197,197,197)"></div><div style="left:10px;top:3px;width:5px;height:5px;background:rgb(198,198,198)"></div><div style="left:15px;top:3px;width:5px;height:5px;background:rgb(207,207,207)"></div><div style="left:20px;top:3px;width:5px;height:5px;background:rgb(201,201,201)"></div><div style="left:25px;top:3px;width:5px;height:5px;background:rgb(235,235,235)"></div><div style="left:0px;top:8px;width:5px;height:5px;background:rgb(210,210,210)"></div><div style="left:5px;top:8px;width:5px;height:5px;background:rgb(218,218,218)"></div><div style="left:10px;top:8px;width:5px;height:5px;background:rgb(225,225,225)"></div><div style="left:15px;top:8px;width:5px;height:5px;background:rgb(215,215,215)"></div><div style="left:20px;top:8px;width:5px;height:5px;background:rgb(232,232,232)"></div><div style="left:0px;top:13px;width:5px;height:5px;background:rgb(195,195,195)"></div><div style="left:5px;top:13px;width:5px;height:5px;background:rgb(193,193,193)"></div><div style="left:10px;top:13px;width:5px;height:5px;background:rgb(182,182,182)"></div><div style="left:15px;top:13px;width:5px;height:5px;background:rgb(184,184,184)"></div><div style="left:20px;top:13px;width:5px;height:5px;background:rgb(182,182,182)"></div><div style="left:25px;top:13px;width:5px;height:5px;background:rgb(193,193,193)"></div><div style="left:30px;top:13px;width:5px;height:5px;background:rgb(172,172,172)"></div><div style="left:35px;top:13px;width:5px;height:5px;background:rgb(193,193,193)"></div><div style="left:40px;top:13px;width:5px;height:5px;background:rgb(175,175,175)"></div><div style="left:45px;top:13px;width:5px;height:5px;background:rgb(175,175,175)"></div><div style="left:50px;top:13px;width:5px;height:5px;background:rgb(199,199,199)"></div><div style="left:0px;top:18px;width:5px;height:5px;background:rgb(180,180,180)"></div><div style="left:5px;top:18px;width:5px;height:5px;background:rgb(184,184,184)"></div><div style="left:10px;top:18px;width:5px;height:5px;background:rgb(198,198,198)"></div><div style="left:15px;top:18px;width:5px;height:5px;background:rgb(208,208,208)"></div><div style="left:20px;top:18px;width:5px;height:5px;background:rgb(194,194,194)"></div><div style="left:25px;top:18px;width:5px;height:5px;background:rgb(205,205,205)"></div><div style="left:30px;top:18px;width:5px;height:5px;background:rgb(200,200,200)"></div><div style="left:35px;top:18px;width:5px;height:5px;background:rgb(184,184,184)"></div><div style="left:40px;top:18px;width:5px;height:5px;background:rgb(199,199,199)"></div><div style="left:45px;top:18px;width:5px;height:5px;background:rgb(206,206,206)"></div><div style="left:50px;top:18px;width:5px;height:5px;background:rgb(199,199,199)"></div><div style="left:55px;top:18px;width:5px;height:5px;background:rgb(220,220,220)"></div><div style="left:0px;top:23px;width:5px;height:5px;background:rgb(206,206,206)"></div><div style="left:5px;top:23px;width:5px;height:5px;background:rgb(214,214,214)"></div><div style="left:10px;top:23px;width:5px;height:5px;background:rgb(196,196,196)"></div><div style="left:15px;top:23px;width:5px;height:5px;background:rgb(189,189,189)"></div><div style="left:20px;top:23px;width:5px;height:5px;background:rgb(202,202,202)"></div><div style="left:25px;top:23px;width:5px;height:5px;background:rgb(202,202,202)"></div><div style="left:30px;top:23px;width:5px;height:5px;background:rgb(189,189,189)"></div><div style="left:35px;top:23px;width:5px;height:5px;background:rgb(185,185,185)"></div><div style="left:40px;top:23px;width:5px;height:5px;background:rgb(185,185,185)"></div><div style="left:45px;top:23px;width:5px;height:5px;background:rgb(210,210,210)"></div><div style="left:50px;top:23px;width:5px;height:5px;background:rgb(208,208,208)"></div><div style="left:55px;top:23px;width:5px;height:5px;background:rgb(230,230,230)"></div><div style="left:0px;top:28px;width:5px;height:5px;background:rgb(183,183,183)"></div><div style="left:5px;top:28px;width:5px;height:5px;background:rgb(196,196,196)"></div><div style="left:10px;top:28px;width:5px;height:5px;background:rgb(203,203,203)"></div><div style="left:15px;top:28px;width:5px;height:5px;background:rgb(184,184,184)"></div><div style="left:20px;top:28px;width:5px;height:5px;background:rgb(193,193,193)"></div><div style="left:25px;top:28px;width:5px;height:5px;background:rgb(186,186,186)"></div><div style="left:30px;top:28px;width:5px;height:5px;background:rgb(186,186,186)"></div><div style="left:35px;top:28px;width:5px;height:5px;background:rgb(180,180,180)"></div><div style="left:40px;top:28px;width:5px;height:5px;background:rgb(188,188,188)"></div><div style="left:45px;top:28px;width:5px;height:5px;background:rgb(186,186,186)"></div><div style="left:50px;top:28px;width:5px;height:5px;background:rgb(189,189,189)"></div><div style="left:55px;top:28px;width:5px;height:5px;background:rgb(196,196,196)"></div><div style="left:60px;top:28px;width:5px;height:5px;background:rgb(212,212,212)"></div><div style="left:0px;top:33px;width:5px;height:2px;background:rgb(218,218,218)"></div><div style="left:5px;top:33px;width:5px;height:2px;background:rgb(210,210,210)"></div><div style="left:10px;top:33px;width:5px;height:2px;background:rgb(208,208,208)"></div><div style="left:15px;top:33px;width:5px;height:2px;background:rgb(217,217,217)"></div><div style="left:20px;top:33px;width:5px;height:2px;background:rgb(213,213,213)"></div><div style="left:25px;top:33px;width:5px;height:2px;background:rgb(204,204,204)"></div><div style="left:30px;top:33px;width:5px;height:2px;background:rgb(201,201,201)"></div><div style="left:35px;top:33px;width:5px;height:2px;background:rgb(211,211,211)"></div><div style="left:40px;top:33px;width:5px;height:2px;background:rgb(214,214,214)"></div><div style="left:45px;top:33px;width:5px;height:2px;background:rgb(218,218,218)"></div><div style="left:50px;top:33px;width:5px;height:2px;background:rgb(216,216,216)"></div><div style="left:55px;top:33px;width:5px;height:2px;background:rgb(238,238,238)"></div></div>
<div style="left:12px;top:327px;width:687px;height:1px;background:#4a4a4a"></div>
<div class="t" style="left:13.7px;top:303.8px;color:#000;font-size:5.8px;line-height:6.3px;transform:scaleX(.92);transform-origin:0 0;">CUERNAVACA,<br>MOR.</div>
<div class="t" style="left:59.5px;top:306.5px;color:#000;font-size:5.8px;line-height:7px;transform:scaleX(.92);transform-origin:0 0;">MUPI</div>
<div class="t" style="left:198.5px;top:306.5px;color:#000;font-size:5.8px;line-height:7px;transform:scaleX(.92);transform-origin:0 0;">MUPI</div>
<div class="t" style="left:265.5px;top:306.5px;color:#000;font-size:5.8px;line-height:7px;transform:scaleX(.92);transform-origin:0 0;">A</div>
<div class="t" style="left:318px;top:306.5px;color:#000;font-size:5.8px;line-height:7px;transform:scaleX(.88);transform-origin:50% 0"><div style="width:33px;text-align:center">09/01/2024</div></div>
<div class="t" style="left:351px;top:306.5px;color:#000;font-size:5.8px;line-height:7px;transform:scaleX(.88);transform-origin:50% 0"><div style="width:34px;text-align:center">22/01/2024</div></div>
<div class="t" style="left:385px;top:306.5px;color:#000;font-size:5.8px;line-height:7px;transform:scaleX(.88);transform-origin:50% 0"><div style="width:65px;text-align:center">$ 2.100,00</div></div>
<div class="t" style="left:450px;top:306.5px;color:#000;font-size:5.8px;line-height:7px;"><div style="width:49px;text-align:center">1</div></div>
<div class="t" style="left:499px;top:306.5px;color:#000;font-size:5.8px;line-height:7px;transform:scaleX(.88);transform-origin:100% 0"><div style="width:57px;text-align:right">$ 2.100,00</div></div>
<div class="t" style="left:629px;top:306.5px;color:#000;font-size:5.8px;line-height:7px">$</div>
<div style="left:132px;top:293px;width:70px;height:34px;overflow:hidden"><div style="left:0px;top:0px;width:5px;height:3px;background:rgb(186,186,186)"></div><div style="left:5px;top:0px;width:5px;height:3px;background:rgb(174,174,174)"></div><div style="left:10px;top:0px;width:5px;height:3px;background:rgb(187,187,187)"></div><div style="left:15px;top:0px;width:5px;height:3px;background:rgb(174,174,174)"></div><div style="left:20px;top:0px;width:5px;height:3px;background:rgb(211,211,211)"></div><div style="left:0px;top:3px;width:5px;height:5px;background:rgb(211,211,211)"></div><div style="left:5px;top:3px;width:5px;height:5px;background:rgb(195,195,195)"></div><div style="left:10px;top:3px;width:5px;height:5px;background:rgb(209,209,209)"></div><div style="left:15px;top:3px;width:5px;height:5px;background:rgb(200,200,200)"></div><div style="left:20px;top:3px;width:5px;height:5px;background:rgb(214,214,214)"></div><div style="left:25px;top:3px;width:5px;height:5px;background:rgb(220,220,220)"></div><div style="left:0px;top:8px;width:5px;height:5px;background:rgb(209,209,209)"></div><div style="left:5px;top:8px;width:5px;height:5px;background:rgb(210,210,210)"></div><div style="left:10px;top:8px;width:5px;height:5px;background:rgb(209,209,209)"></div><div style="left:15px;top:8px;width:5px;height:5px;background:rgb(220,220,220)"></div><div style="left:20px;top:8px;width:5px;height:5px;background:rgb(249,249,249)"></div><div style="left:0px;top:13px;width:5px;height:5px;background:rgb(193,193,193)"></div><div style="left:5px;top:13px;width:5px;height:5px;background:rgb(173,173,173)"></div><div style="left:10px;top:13px;width:5px;height:5px;background:rgb(187,187,187)"></div><div style="left:15px;top:13px;width:5px;height:5px;background:rgb(171,171,171)"></div><div style="left:20px;top:13px;width:5px;height:5px;background:rgb(180,180,180)"></div><div style="left:25px;top:13px;width:5px;height:5px;background:rgb(191,191,191)"></div><div style="left:30px;top:13px;width:5px;height:5px;background:rgb(186,186,186)"></div><div style="left:35px;top:13px;width:5px;height:5px;background:rgb(186,186,186)"></div><div style="left:40px;top:13px;width:5px;height:5px;background:rgb(187,187,187)"></div><div style="left:45px;top:13px;width:5px;height:5px;background:rgb(185,185,185)"></div><div style="left:50px;top:13px;width:5px;height:5px;background:rgb(220,220,220)"></div><div style="left:0px;top:18px;width:5px;height:5px;background:rgb(204,204,204)"></div><div style="left:5px;top:18px;width:5px;height:5px;background:rgb(183,183,183)"></div><div style="left:10px;top:18px;width:5px;height:5px;background:rgb(208,208,208)"></div><div style="left:15px;top:18px;width:5px;height:5px;background:rgb(197,197,197)"></div><div style="left:20px;top:18px;width:5px;height:5px;background:rgb(181,181,181)"></div><div style="left:25px;top:18px;width:5px;height:5px;background:rgb(187,187,187)"></div><div style="left:30px;top:18px;width:5px;height:5px;background:rgb(186,186,186)"></div><div style="left:35px;top:18px;width:5px;height:5px;background:rgb(188,188,188)"></div><div style="left:40px;top:18px;width:5px;height:5px;background:rgb(181,181,181)"></div><div style="left:45px;top:18px;width:5px;height:5px;background:rgb(204,204,204)"></div><div style="left:50px;top:18px;width:5px;height:5px;background:rgb(183,183,183)"></div><div style="left:55px;top:18px;width:5px;height:5px;background:rgb(221,221,221)"></div><div style="left:0px;top:23px;width:5px;height:5px;background:rgb(199,199,199)"></div><div style="left:5px;top:23px;width:5px;height:5px;background:rgb(202,202,202)"></div><div style="left:10px;top:23px;width:5px;height:5px;background:rgb(185,185,185)"></div><div style="left:15px;top:23px;width:5px;height:5px;background:rgb(209,209,209)"></div><div style="left:20px;top:23px;width:5px;height:5px;background:rgb(213,213,213)"></div><div style="left:25px;top:23px;width:5px;height:5px;background:rgb(214,214,214)"></div><div style="left:30px;top:23px;width:5px;height:5px;background:rgb(187,187,187)"></div><div style="left:35px;top:23px;width:5px;height:5px;background:rgb(199,199,199)"></div><div style="left:40px;top:23px;width:5px;height:5px;background:rgb(195,195,195)"></div><div style="left:45px;top:23px;width:5px;height:5px;background:rgb(204,204,204)"></div><div style="left:50px;top:23px;width:5px;height:5px;background:rgb(201,201,201)"></div><div style="left:55px;top:23px;width:5px;height:5px;background:rgb(229,229,229)"></div><div style="left:0px;top:28px;width:5px;height:5px;background:rgb(196,196,196)"></div><div style="left:5px;top:28px;width:5px;height:5px;background:rgb(186,186,186)"></div><div style="left:10px;top:28px;width:5px;height:5px;background:rgb(202,202,202)"></div><div style="left:15px;top:28px;width:5px;height:5px;background:rgb(188,188,188)"></div><div style="left:20px;top:28px;width:5px;height:5px;background:rgb(194,194,194)"></div><div style="left:25px;top:28px;width:5px;height:5px;background:rgb(196,196,196)"></div><div style="left:30px;top:28px;width:5px;height:5px;background:rgb(197,197,197)"></div><div style="left:35px;top:28px;width:5px;height:5px;background:rgb(205,205,205)"></div><div style="left:40px;top:28px;width:5px;height:5px;background:rgb(195,195,195)"></div><div style="left:45px;top:28px;width:5px;height:5px;background:rgb(196,196,196)"></div><div style="left:50px;top:28px;width:5px;height:5px;background:rgb(187,187,187)"></div><div style="left:55px;top:28px;width:5px;height:5px;background:rgb(202,202,202)"></div><div style="left:60px;top:28px;width:5px;height:5px;background:rgb(221,221,221)"></div><div style="left:0px;top:33px;width:5px;height:2px;background:rgb(208,208,208)"></div><div style="left:5px;top:33px;width:5px;height:2px;background:rgb(217,217,217)"></div><div style="left:10px;top:33px;width:5px;height:2px;background:rgb(206,206,206)"></div><div style="left:15px;top:33px;width:5px;height:2px;background:rgb(214,214,214)"></div><div style="left:20px;top:33px;width:5px;height:2px;background:rgb(204,204,204)"></div><div style="left:25px;top:33px;width:5px;height:2px;background:rgb(213,213,213)"></div><div style="left:30px;top:33px;width:5px;height:2px;background:rgb(203,203,203)"></div><div style="left:35px;top:33px;width:5px;height:2px;background:rgb(212,212,212)"></div><div style="left:40px;top:33px;width:5px;height:2px;background:rgb(214,214,214)"></div><div style="left:45px;top:33px;width:5px;height:2px;background:rgb(210,210,210)"></div><div style="left:50px;top:33px;width:5px;height:2px;background:rgb(202,202,202)"></div><div style="left:55px;top:33px;width:5px;height:2px;background:rgb(232,232,232)"></div></div>
<div style="left:12px;top:362px;width:687px;height:1px;background:#4a4a4a"></div>
<div class="t" style="left:13.7px;top:338.8px;color:#000;font-size:5.8px;line-height:6.3px;transform:scaleX(.92);transform-origin:0 0;">CUERNAVACA,<br>MOR.</div>
<div class="t" style="left:59.5px;top:341.5px;color:#000;font-size:5.8px;line-height:7px;transform:scaleX(.92);transform-origin:0 0;">MUPI</div>
<div class="t" style="left:198.5px;top:341.5px;color:#000;font-size:5.8px;line-height:7px;transform:scaleX(.92);transform-origin:0 0;">MUPI</div>
<div class="t" style="left:265.5px;top:341.5px;color:#000;font-size:5.8px;line-height:7px;transform:scaleX(.92);transform-origin:0 0;">A</div>
<div class="t" style="left:318px;top:341.5px;color:#000;font-size:5.8px;line-height:7px;transform:scaleX(.88);transform-origin:50% 0"><div style="width:33px;text-align:center">23/01/2024</div></div>
<div class="t" style="left:351px;top:341.5px;color:#000;font-size:5.8px;line-height:7px;transform:scaleX(.88);transform-origin:50% 0"><div style="width:34px;text-align:center">31/01/2024</div></div>
<div class="t" style="left:385px;top:341.5px;color:#000;font-size:5.8px;line-height:7px;transform:scaleX(.88);transform-origin:50% 0"><div style="width:65px;text-align:center">$ 2.100,00</div></div>
<div class="t" style="left:450px;top:341.5px;color:#000;font-size:5.8px;line-height:7px;"><div style="width:49px;text-align:center">1</div></div>
<div class="t" style="left:499px;top:341.5px;color:#000;font-size:5.8px;line-height:7px;transform:scaleX(.88);transform-origin:100% 0"><div style="width:57px;text-align:right">$ 2.100,00</div></div>
<div class="t" style="left:629px;top:341.5px;color:#000;font-size:5.8px;line-height:7px">$</div>
<div style="left:132px;top:328px;width:70px;height:34px;overflow:hidden"><div style="left:0px;top:0px;width:5px;height:3px;background:rgb(183,183,183)"></div><div style="left:5px;top:0px;width:5px;height:3px;background:rgb(172,172,172)"></div><div style="left:10px;top:0px;width:5px;height:3px;background:rgb(176,176,176)"></div><div style="left:15px;top:0px;width:5px;height:3px;background:rgb(179,179,179)"></div><div style="left:20px;top:0px;width:5px;height:3px;background:rgb(198,198,198)"></div><div style="left:0px;top:3px;width:5px;height:5px;background:rgb(199,199,199)"></div><div style="left:5px;top:3px;width:5px;height:5px;background:rgb(215,215,215)"></div><div style="left:10px;top:3px;width:5px;height:5px;background:rgb(206,206,206)"></div><div style="left:15px;top:3px;width:5px;height:5px;background:rgb(199,199,199)"></div><div style="left:20px;top:3px;width:5px;height:5px;background:rgb(203,203,203)"></div><div style="left:25px;top:3px;width:5px;height:5px;background:rgb(224,224,224)"></div><div style="left:0px;top:8px;width:5px;height:5px;background:rgb(219,219,219)"></div><div style="left:5px;top:8px;width:5px;height:5px;background:rgb(212,212,212)"></div><div style="left:10px;top:8px;width:5px;height:5px;background:rgb(208,208,208)"></div><div style="left:15px;top:8px;width:5px;height:5px;background:rgb(217,217,217)"></div><div style="left:20px;top:8px;width:5px;height:5px;background:rgb(245,245,245)"></div><div style="left:0px;top:13px;width:5px;height:5px;background:rgb(175,175,175)"></div><div style="left:5px;top:13px;width:5px;height:5px;background:rgb(191,191,191)"></div><div style="left:10px;top:13px;width:5px;height:5px;background:rgb(177,177,177)"></div><div style="left:15px;top:13px;width:5px;height:5px;background:rgb(175,175,175)"></div><div style="left:20px;top:13px;width:5px;height:5px;background:rgb(192,192,192)"></div><div style="left:25px;top:13px;width:5px;height:5px;background:rgb(183,183,183)"></div><div style="left:30px;top:13px;width:5px;height:5px;background:rgb(186,186,186)"></div><div style="left:35px;top:13px;width:5px;height:5px;background:rgb(182,182,182)"></div><div style="left:40px;top:13px;width:5px;height:5px;background:rgb(180,180,180)"></div><div style="left:45px;top:13px;width:5px;height:5px;background:rgb(183,183,183)"></div><div style="left:50px;top:13px;width:5px;height:5px;background:rgb(201,201,201)"></div><div style="left:0px;top:18px;width:5px;height:5px;background:rgb(191,191,191)"></div><div style="left:5px;top:18px;width:5px;height:5px;background:rgb(190,190,190)"></div><div style="left:10px;top:18px;width:5px;height:5px;background:rgb(182,182,182)"></div><div style="left:15px;top:18px;width:5px;height:5px;background:rgb(203,203,203)"></div><div style="left:20px;top:18px;width:5px;height:5px;background:rgb(191,191,191)"></div><div style="left:25px;top:18px;width:5px;height:5px;background:rgb(180,180,180)"></div><div style="left:30px;top:18px;width:5px;height:5px;background:rgb(190,190,190)"></div><div style="left:35px;top:18px;width:5px;height:5px;background:rgb(197,197,197)"></div><div style="left:40px;top:18px;width:5px;height:5px;background:rgb(194,194,194)"></div><div style="left:45px;top:18px;width:5px;height:5px;background:rgb(194,194,194)"></div><div style="left:50px;top:18px;width:5px;height:5px;background:rgb(202,202,202)"></div><div style="left:55px;top:18px;width:5px;height:5px;background:rgb(205,205,205)"></div><div style="left:0px;top:23px;width:5px;height:5px;background:rgb(197,197,197)"></div><div style="left:5px;top:23px;width:5px;height:5px;background:rgb(195,195,195)"></div><div style="left:10px;top:23px;width:5px;height:5px;background:rgb(201,201,201)"></div><div style="left:15px;top:23px;width:5px;height:5px;background:rgb(204,204,204)"></div><div style="left:20px;top:23px;width:5px;height:5px;background:rgb(194,194,194)"></div><div style="left:25px;top:23px;width:5px;height:5px;background:rgb(201,201,201)"></div><div style="left:30px;top:23px;width:5px;height:5px;background:rgb(215,215,215)"></div><div style="left:35px;top:23px;width:5px;height:5px;background:rgb(187,187,187)"></div><div style="left:40px;top:23px;width:5px;height:5px;background:rgb(188,188,188)"></div><div style="left:45px;top:23px;width:5px;height:5px;background:rgb(214,214,214)"></div><div style="left:50px;top:23px;width:5px;height:5px;background:rgb(210,210,210)"></div><div style="left:55px;top:23px;width:5px;height:5px;background:rgb(217,217,217)"></div><div style="left:0px;top:28px;width:5px;height:5px;background:rgb(183,183,183)"></div><div style="left:5px;top:28px;width:5px;height:5px;background:rgb(182,182,182)"></div><div style="left:10px;top:28px;width:5px;height:5px;background:rgb(188,188,188)"></div><div style="left:15px;top:28px;width:5px;height:5px;background:rgb(188,188,188)"></div><div style="left:20px;top:28px;width:5px;height:5px;background:rgb(181,181,181)"></div><div style="left:25px;top:28px;width:5px;height:5px;background:rgb(204,204,204)"></div><div style="left:30px;top:28px;width:5px;height:5px;background:rgb(185,185,185)"></div><div style="left:35px;top:28px;width:5px;height:5px;background:rgb(188,188,188)"></div><div style="left:40px;top:28px;width:5px;height:5px;background:rgb(204,204,204)"></div><div style="left:45px;top:28px;width:5px;height:5px;background:rgb(184,184,184)"></div><div style="left:50px;top:28px;width:5px;height:5px;background:rgb(193,193,193)"></div><div style="left:55px;top:28px;width:5px;height:5px;background:rgb(201,201,201)"></div><div style="left:60px;top:28px;width:5px;height:5px;background:rgb(213,213,213)"></div><div style="left:0px;top:33px;width:5px;height:2px;background:rgb(212,212,212)"></div><div style="left:5px;top:33px;width:5px;height:2px;background:rgb(204,204,204)"></div><div style="left:10px;top:33px;width:5px;height:2px;background:rgb(217,217,217)"></div><div style="left:15px;top:33px;width:5px;height:2px;background:rgb(216,216,216)"></div><div style="left:20px;top:33px;width:5px;height:2px;background:rgb(218,218,218)"></div><div style="left:25px;top:33px;width:5px;height:2px;background:rgb(215,215,215)"></div><div style="left:30px;top:33px;width:5px;height:2px;background:rgb(210,210,210)"></div><div style="left:35px;top:33px;width:5px;height:2px;background:rgb(202,202,202)"></div><div style="left:40px;top:33px;width:5px;height:2px;background:rgb(208,208,208)"></div><div style="left:45px;top:33px;width:5px;height:2px;background:rgb(201,201,201)"></div><div style="left:50px;top:33px;width:5px;height:2px;background:rgb(205,205,205)"></div><div style="left:55px;top:33px;width:5px;height:2px;background:rgb(238,238,238)"></div></div>
<div style="left:12px;top:396px;width:687px;height:1px;background:#4a4a4a"></div>
<div class="t" style="left:13.7px;top:373.3px;color:#000;font-size:5.8px;line-height:6.3px;transform:scaleX(.92);transform-origin:0 0;">CUERNAVACA,<br>MOR.</div>
<div class="t" style="left:59.5px;top:376.0px;color:#000;font-size:5.8px;line-height:7px;transform:scaleX(.92);transform-origin:0 0;">MUPI</div>
<div class="t" style="left:198.5px;top:376.0px;color:#000;font-size:5.8px;line-height:7px;transform:scaleX(.92);transform-origin:0 0;">MUPI</div>
<div class="t" style="left:265.5px;top:376.0px;color:#000;font-size:5.8px;line-height:7px;transform:scaleX(.92);transform-origin:0 0;">A</div>
<div class="t" style="left:318px;top:376.0px;color:#000;font-size:5.8px;line-height:7px;transform:scaleX(.88);transform-origin:50% 0"><div style="width:33px;text-align:center">01/01/2024</div></div>
<div class="t" style="left:351px;top:376.0px;color:#000;font-size:5.8px;line-height:7px;transform:scaleX(.88);transform-origin:50% 0"><div style="width:34px;text-align:center">08/01/2024</div></div>
<div class="t" style="left:385px;top:376.0px;color:#000;font-size:5.8px;line-height:7px;transform:scaleX(.88);transform-origin:50% 0"><div style="width:65px;text-align:center">$ 2.100,00</div></div>
<div class="t" style="left:450px;top:376.0px;color:#000;font-size:5.8px;line-height:7px;"><div style="width:49px;text-align:center">1</div></div>
<div class="t" style="left:499px;top:376.0px;color:#000;font-size:5.8px;line-height:7px;transform:scaleX(.88);transform-origin:100% 0"><div style="width:57px;text-align:right">$ 2.100,00</div></div>
<div class="t" style="left:629px;top:376.0px;color:#000;font-size:5.8px;line-height:7px">$</div>
<div style="left:132px;top:363px;width:70px;height:33px;overflow:hidden"><div style="left:0px;top:0px;width:5px;height:3px;background:rgb(172,172,172)"></div><div style="left:5px;top:0px;width:5px;height:3px;background:rgb(178,178,178)"></div><div style="left:10px;top:0px;width:5px;height:3px;background:rgb(170,170,170)"></div><div style="left:15px;top:0px;width:5px;height:3px;background:rgb(190,190,190)"></div><div style="left:20px;top:0px;width:5px;height:3px;background:rgb(197,197,197)"></div><div style="left:0px;top:3px;width:5px;height:5px;background:rgb(203,203,203)"></div><div style="left:5px;top:3px;width:5px;height:5px;background:rgb(197,197,197)"></div><div style="left:10px;top:3px;width:5px;height:5px;background:rgb(214,214,214)"></div><div style="left:15px;top:3px;width:5px;height:5px;background:rgb(202,202,202)"></div><div style="left:20px;top:3px;width:5px;height:5px;background:rgb(197,197,197)"></div><div style="left:25px;top:3px;width:5px;height:5px;background:rgb(228,228,228)"></div><div style="left:0px;top:8px;width:5px;height:5px;background:rgb(208,208,208)"></div><div style="left:5px;top:8px;width:5px;height:5px;background:rgb(219,219,219)"></div><div style="left:10px;top:8px;width:5px;height:5px;background:rgb(205,205,205)"></div><div style="left:15px;top:8px;width:5px;height:5px;background:rgb(215,215,215)"></div><div style="left:20px;top:8px;width:5px;height:5px;background:rgb(247,247,247)"></div><div style="left:0px;top:13px;width:5px;height:5px;background:rgb(183,183,183)"></div><div style="left:5px;top:13px;width:5px;height:5px;background:rgb(178,178,178)"></div><div style="left:10px;top:13px;width:5px;height:5px;background:rgb(189,189,189)"></div><div style="left:15px;top:13px;width:5px;height:5px;background:rgb(174,174,174)"></div><div style="left:20px;top:13px;width:5px;height:5px;background:rgb(171,171,171)"></div><div style="left:25px;top:13px;width:5px;height:5px;background:rgb(186,186,186)"></div><div style="left:30px;top:13px;width:5px;height:5px;background:rgb(192,192,192)"></div><div style="left:35px;top:13px;width:5px;height:5px;background:rgb(177,177,177)"></div><div style="left:40px;top:13px;width:5px;height:5px;background:rgb(173,173,173)"></div><div style="left:45px;top:13px;width:5px;height:5px;background:rgb(175,175,175)"></div><div style="left:50px;top:13px;width:5px;height:5px;background:rgb(203,203,203)"></div><div style="left:0px;top:18px;width:5px;height:5px;background:rgb(181,181,181)"></div><div style="left:5px;top:18px;width:5px;height:5px;background:rgb(185,185,185)"></div><div style="left:10px;top:18px;width:5px;height:5px;background:rgb(186,186,186)"></div><div style="left:15px;top:18px;width:5px;height:5px;background:rgb(209,209,209)"></div><div style="left:20px;top:18px;width:5px;height:5px;background:rgb(189,189,189)"></div><div style="left:25px;top:18px;width:5px;height:5px;background:rgb(200,200,200)"></div><div style="left:30px;top:18px;width:5px;height:5px;background:rgb(189,189,189)"></div><div style="left:35px;top:18px;width:5px;height:5px;background:rgb(196,196,196)"></div><div style="left:40px;top:18px;width:5px;height:5px;background:rgb(204,204,204)"></div><div style="left:45px;top:18px;width:5px;height:5px;background:rgb(186,186,186)"></div><div style="left:50px;top:18px;width:5px;height:5px;background:rgb(189,189,189)"></div><div style="left:55px;top:18px;width:5px;height:5px;background:rgb(219,219,219)"></div><div style="left:0px;top:23px;width:5px;height:5px;background:rgb(201,201,201)"></div><div style="left:5px;top:23px;width:5px;height:5px;background:rgb(206,206,206)"></div><div style="left:10px;top:23px;width:5px;height:5px;background:rgb(190,190,190)"></div><div style="left:15px;top:23px;width:5px;height:5px;background:rgb(193,193,193)"></div><div style="left:20px;top:23px;width:5px;height:5px;background:rgb(196,196,196)"></div><div style="left:25px;top:23px;width:5px;height:5px;background:rgb(210,210,210)"></div><div style="left:30px;top:23px;width:5px;height:5px;background:rgb(185,185,185)"></div><div style="left:35px;top:23px;width:5px;height:5px;background:rgb(193,193,193)"></div><div style="left:40px;top:23px;width:5px;height:5px;background:rgb(186,186,186)"></div><div style="left:45px;top:23px;width:5px;height:5px;background:rgb(185,185,185)"></div><div style="left:50px;top:23px;width:5px;height:5px;background:rgb(185,185,185)"></div><div style="left:55px;top:23px;width:5px;height:5px;background:rgb(233,233,233)"></div><div style="left:0px;top:28px;width:5px;height:5px;background:rgb(196,196,196)"></div><div style="left:5px;top:28px;width:5px;height:5px;background:rgb(197,197,197)"></div><div style="left:10px;top:28px;width:5px;height:5px;background:rgb(186,186,186)"></div><div style="left:15px;top:28px;width:5px;height:5px;background:rgb(196,196,196)"></div><div style="left:20px;top:28px;width:5px;height:5px;background:rgb(195,195,195)"></div><div style="left:25px;top:28px;width:5px;height:5px;background:rgb(187,187,187)"></div><div style="left:30px;top:28px;width:5px;height:5px;background:rgb(194,194,194)"></div><div style="left:35px;top:28px;width:5px;height:5px;background:rgb(183,183,183)"></div><div style="left:40px;top:28px;width:5px;height:5px;background:rgb(201,201,201)"></div><div style="left:45px;top:28px;width:5px;height:5px;background:rgb(200,200,200)"></div><div style="left:50px;top:28px;width:5px;height:5px;background:rgb(193,193,193)"></div><div style="left:55px;top:28px;width:5px;height:5px;background:rgb(201,201,201)"></div><div style="left:60px;top:28px;width:5px;height:5px;background:rgb(220,220,220)"></div><div style="left:0px;top:33px;width:5px;height:2px;background:rgb(217,217,217)"></div><div style="left:5px;top:33px;width:5px;height:2px;background:rgb(212,212,212)"></div><div style="left:10px;top:33px;width:5px;height:2px;background:rgb(216,216,216)"></div><div style="left:15px;top:33px;width:5px;height:2px;background:rgb(209,209,209)"></div><div style="left:20px;top:33px;width:5px;height:2px;background:rgb(206,206,206)"></div><div style="left:25px;top:33px;width:5px;height:2px;background:rgb(207,207,207)"></div><div style="left:30px;top:33px;width:5px;height:2px;background:rgb(210,210,210)"></div><div style="left:35px;top:33px;width:5px;height:2px;background:rgb(206,206,206)"></div><div style="left:40px;top:33px;width:5px;height:2px;background:rgb(220,220,220)"></div><div style="left:45px;top:33px;width:5px;height:2px;background:rgb(204,204,204)"></div><div style="left:50px;top:33px;width:5px;height:2px;background:rgb(212,212,212)"></div><div style="left:55px;top:33px;width:5px;height:2px;background:rgb(236,236,236)"></div></div>
<div style="left:12px;top:431px;width:687px;height:1px;background:#4a4a4a"></div>
<div class="t" style="left:13.7px;top:407.8px;color:#000;font-size:5.8px;line-height:6.3px;transform:scaleX(.92);transform-origin:0 0;">CUERNAVACA,<br>MOR.</div>
<div class="t" style="left:59.5px;top:410.5px;color:#000;font-size:5.8px;line-height:7px;transform:scaleX(.92);transform-origin:0 0;">MUPI</div>
<div class="t" style="left:198.5px;top:410.5px;color:#000;font-size:5.8px;line-height:7px;transform:scaleX(.92);transform-origin:0 0;">MUPI</div>
<div class="t" style="left:265.5px;top:410.5px;color:#000;font-size:5.8px;line-height:7px;transform:scaleX(.92);transform-origin:0 0;">A</div>
<div class="t" style="left:318px;top:410.5px;color:#000;font-size:5.8px;line-height:7px;transform:scaleX(.88);transform-origin:50% 0"><div style="width:33px;text-align:center">09/01/2024</div></div>
<div class="t" style="left:351px;top:410.5px;color:#000;font-size:5.8px;line-height:7px;transform:scaleX(.88);transform-origin:50% 0"><div style="width:34px;text-align:center">22/01/2024</div></div>
<div class="t" style="left:385px;top:410.5px;color:#000;font-size:5.8px;line-height:7px;transform:scaleX(.88);transform-origin:50% 0"><div style="width:65px;text-align:center">$ 2.100,00</div></div>
<div class="t" style="left:450px;top:410.5px;color:#000;font-size:5.8px;line-height:7px;"><div style="width:49px;text-align:center">1</div></div>
<div class="t" style="left:499px;top:410.5px;color:#000;font-size:5.8px;line-height:7px;transform:scaleX(.88);transform-origin:100% 0"><div style="width:57px;text-align:right">$ 2.100,00</div></div>
<div class="t" style="left:629px;top:410.5px;color:#000;font-size:5.8px;line-height:7px">$</div>
<div style="left:132px;top:397px;width:70px;height:34px;overflow:hidden"><div style="left:0px;top:0px;width:5px;height:3px;background:rgb(171,171,171)"></div><div style="left:5px;top:0px;width:5px;height:3px;background:rgb(174,174,174)"></div><div style="left:10px;top:0px;width:5px;height:3px;background:rgb(170,170,170)"></div><div style="left:15px;top:0px;width:5px;height:3px;background:rgb(172,172,172)"></div><div style="left:20px;top:0px;width:5px;height:3px;background:rgb(215,215,215)"></div><div style="left:0px;top:3px;width:5px;height:5px;background:rgb(203,203,203)"></div><div style="left:5px;top:3px;width:5px;height:5px;background:rgb(208,208,208)"></div><div style="left:10px;top:3px;width:5px;height:5px;background:rgb(200,200,200)"></div><div style="left:15px;top:3px;width:5px;height:5px;background:rgb(196,196,196)"></div><div style="left:20px;top:3px;width:5px;height:5px;background:rgb(197,197,197)"></div><div style="left:25px;top:3px;width:5px;height:5px;background:rgb(232,232,232)"></div><div style="left:0px;top:8px;width:5px;height:5px;background:rgb(221,221,221)"></div><div style="left:5px;top:8px;width:5px;height:5px;background:rgb(214,214,214)"></div><div style="left:10px;top:8px;width:5px;height:5px;background:rgb(224,224,224)"></div><div style="left:15px;top:8px;width:5px;height:5px;background:rgb(212,212,212)"></div><div style="left:20px;top:8px;width:5px;height:5px;background:rgb(239,239,239)"></div><div style="left:0px;top:13px;width:5px;height:5px;background:rgb(171,171,171)"></div><div style="left:5px;top:13px;width:5px;height:5px;background:rgb(184,184,184)"></div><div style="left:10px;top:13px;width:5px;height:5px;background:rgb(175,175,175)"></div><div style="left:15px;top:13px;width:5px;height:5px;background:rgb(175,175,175)"></div><div style="left:20px;top:13px;width:5px;height:5px;background:rgb(178,178,178)"></div><div style="left:25px;top:13px;width:5px;height:5px;background:rgb(184,184,184)"></div><div style="left:30px;top:13px;width:5px;height:5px;background:rgb(170,170,170)"></div><div style="left:35px;top:13px;width:5px;height:5px;background:rgb(178,178,178)"></div><div style="left:40px;top:13px;width:5px;height:5px;background:rgb(181,181,181)"></div><div style="left:45px;top:13px;width:5px;height:5px;background:rgb(180,180,180)"></div><div style="left:50px;top:13px;width:5px;height:5px;background:rgb(212,212,212)"></div><div style="left:0px;top:18px;width:5px;height:5px;background:rgb(190,190,190)"></div><div style="left:5px;top:18px;width:5px;height:5px;background:rgb(187,187,187)"></div><div style="left:10px;top:18px;width:5px;height:5px;background:rgb(181,181,181)"></div><div style="left:15px;top:18px;width:5px;height:5px;background:rgb(210,210,210)"></div><div style="left:20px;top:18px;width:5px;height:5px;background:rgb(208,208,208)"></div><div style="left:25px;top:18px;width:5px;height:5px;background:rgb(189,189,189)"></div><div style="left:30px;top:18px;width:5px;height:5px;background:rgb(186,186,186)"></div><div style="left:35px;top:18px;width:5px;height:5px;background:rgb(191,191,191)"></div><div style="left:40px;top:18px;width:5px;height:5px;background:rgb(185,185,185)"></div><div style="left:45px;top:18px;width:5px;height:5px;background:rgb(180,180,180)"></div><div style="left:50px;top:18px;width:5px;height:5px;background:rgb(190,190,190)"></div><div style="left:55px;top:18px;width:5px;height:5px;background:rgb(217,217,217)"></div><div style="left:0px;top:23px;width:5px;height:5px;background:rgb(187,187,187)"></div><div style="left:5px;top:23px;width:5px;height:5px;background:rgb(200,200,200)"></div><div style="left:10px;top:23px;width:5px;height:5px;background:rgb(193,193,193)"></div><div style="left:15px;top:23px;width:5px;height:5px;background:rgb(201,201,201)"></div><div style="left:20px;top:23px;width:5px;height:5px;background:rgb(205,205,205)"></div><div style="left:25px;top:23px;width:5px;height:5px;background:rgb(191,191,191)"></div><div style="left:30px;top:23px;width:5px;height:5px;background:rgb(192,192,192)"></div><div style="left:35px;top:23px;width:5px;height:5px;background:rgb(201,201,201)"></div><div style="left:40px;top:23px;width:5px;height:5px;background:rgb(209,209,209)"></div><div style="left:45px;top:23px;width:5px;height:5px;background:rgb(185,185,185)"></div><div style="left:50px;top:23px;width:5px;height:5px;background:rgb(187,187,187)"></div><div style="left:55px;top:23px;width:5px;height:5px;background:rgb(218,218,218)"></div><div style="left:0px;top:28px;width:5px;height:5px;background:rgb(182,182,182)"></div><div style="left:5px;top:28px;width:5px;height:5px;background:rgb(184,184,184)"></div><div style="left:10px;top:28px;width:5px;height:5px;background:rgb(192,192,192)"></div><div style="left:15px;top:28px;width:5px;height:5px;background:rgb(198,198,198)"></div><div style="left:20px;top:28px;width:5px;height:5px;background:rgb(181,181,181)"></div><div style="left:25px;top:28px;width:5px;height:5px;background:rgb(192,192,192)"></div><div style="left:30px;top:28px;width:5px;height:5px;background:rgb(180,180,180)"></div><div style="left:35px;top:28px;width:5px;height:5px;background:rgb(189,189,189)"></div><div style="left:40px;top:28px;width:5px;height:5px;background:rgb(189,189,189)"></div><div style="left:45px;top:28px;width:5px;height:5px;background:rgb(200,200,200)"></div><div style="left:50px;top:28px;width:5px;height:5px;background:rgb(187,187,187)"></div><div style="left:55px;top:28px;width:5px;height:5px;background:rgb(182,182,182)"></div><div style="left:60px;top:28px;width:5px;height:5px;background:rgb(223,223,223)"></div><div style="left:0px;top:33px;width:5px;height:2px;background:rgb(216,216,216)"></div><div style="left:5px;top:33px;width:5px;height:2px;background:rgb(204,204,204)"></div><div style="left:10px;top:33px;width:5px;height:2px;background:rgb(219,219,219)"></div><div style="left:15px;top:33px;width:5px;height:2px;background:rgb(212,212,212)"></div><div style="left:20px;top:33px;width:5px;height:2px;background:rgb(210,210,210)"></div><div style="left:25px;top:33px;width:5px;height:2px;background:rgb(215,215,215)"></div><div style="left:30px;top:33px;width:5px;height:2px;background:rgb(204,204,204)"></div><div style="left:35px;top:33px;width:5px;height:2px;background:rgb(209,209,209)"></div><div style="left:40px;top:33px;width:5px;height:2px;background:rgb(219,219,219)"></div><div style="left:45px;top:33px;width:5px;height:2px;background:rgb(220,220,220)"></div><div style="left:50px;top:33px;width:5px;height:2px;background:rgb(204,204,204)"></div><div style="left:55px;top:33px;width:5px;height:2px;background:rgb(226,226,226)"></div></div>
<div style="left:12px;top:466px;width:687px;height:1px;background:#4a4a4a"></div>
<div class="t" style="left:13.7px;top:442.8px;color:#000;font-size:5.8px;line-height:6.3px;transform:scaleX(.92);transform-origin:0 0;">CUERNAVACA,<br>MOR.</div>
<div class="t" style="left:59.5px;top:445.5px;color:#000;font-size:5.8px;line-height:7px;transform:scaleX(.92);transform-origin:0 0;">MUPI</div>
<div class="t" style="left:198.5px;top:445.5px;color:#000;font-size:5.8px;line-height:7px;transform:scaleX(.92);transform-origin:0 0;">MUPI</div>
<div class="t" style="left:265.5px;top:445.5px;color:#000;font-size:5.8px;line-height:7px;transform:scaleX(.92);transform-origin:0 0;">A</div>
<div class="t" style="left:318px;top:445.5px;color:#000;font-size:5.8px;line-height:7px;transform:scaleX(.88);transform-origin:50% 0"><div style="width:33px;text-align:center">23/01/2024</div></div>
<div class="t" style="left:351px;top:445.5px;color:#000;font-size:5.8px;line-height:7px;transform:scaleX(.88);transform-origin:50% 0"><div style="width:34px;text-align:center">31/01/2024</div></div>
<div class="t" style="left:385px;top:445.5px;color:#000;font-size:5.8px;line-height:7px;transform:scaleX(.88);transform-origin:50% 0"><div style="width:65px;text-align:center">$ 2.100,00</div></div>
<div class="t" style="left:450px;top:445.5px;color:#000;font-size:5.8px;line-height:7px;"><div style="width:49px;text-align:center">1</div></div>
<div class="t" style="left:499px;top:445.5px;color:#000;font-size:5.8px;line-height:7px;transform:scaleX(.88);transform-origin:100% 0"><div style="width:57px;text-align:right">$ 2.100,00</div></div>
<div class="t" style="left:629px;top:445.5px;color:#000;font-size:5.8px;line-height:7px">$</div>
<div style="left:132px;top:432px;width:70px;height:34px;overflow:hidden"><div style="left:0px;top:0px;width:5px;height:3px;background:rgb(186,186,186)"></div><div style="left:5px;top:0px;width:5px;height:3px;background:rgb(190,190,190)"></div><div style="left:10px;top:0px;width:5px;height:3px;background:rgb(183,183,183)"></div><div style="left:15px;top:0px;width:5px;height:3px;background:rgb(186,186,186)"></div><div style="left:20px;top:0px;width:5px;height:3px;background:rgb(199,199,199)"></div><div style="left:0px;top:3px;width:5px;height:5px;background:rgb(211,211,211)"></div><div style="left:5px;top:3px;width:5px;height:5px;background:rgb(211,211,211)"></div><div style="left:10px;top:3px;width:5px;height:5px;background:rgb(213,213,213)"></div><div style="left:15px;top:3px;width:5px;height:5px;background:rgb(195,195,195)"></div><div style="left:20px;top:3px;width:5px;height:5px;background:rgb(213,213,213)"></div><div style="left:25px;top:3px;width:5px;height:5px;background:rgb(240,240,240)"></div><div style="left:0px;top:8px;width:5px;height:5px;background:rgb(212,212,212)"></div><div style="left:5px;top:8px;width:5px;height:5px;background:rgb(207,207,207)"></div><div style="left:10px;top:8px;width:5px;height:5px;background:rgb(205,205,205)"></div><div style="left:15px;top:8px;width:5px;height:5px;background:rgb(206,206,206)"></div><div style="left:20px;top:8px;width:5px;height:5px;background:rgb(234,234,234)"></div><div style="left:0px;top:13px;width:5px;height:5px;background:rgb(190,190,190)"></div><div style="left:5px;top:13px;width:5px;height:5px;background:rgb(181,181,181)"></div><div style="left:10px;top:13px;width:5px;height:5px;background:rgb(173,173,173)"></div><div style="left:15px;top:13px;width:5px;height:5px;background:rgb(182,182,182)"></div><div style="left:20px;top:13px;width:5px;height:5px;background:rgb(184,184,184)"></div><div style="left:25px;top:13px;width:5px;height:5px;background:rgb(187,187,187)"></div><div style="left:30px;top:13px;width:5px;height:5px;background:rgb(171,171,171)"></div><div style="left:35px;top:13px;width:5px;height:5px;background:rgb(190,190,190)"></div><div style="left:40px;top:13px;width:5px;height:5px;background:rgb(170,170,170)"></div><div style="left:45px;top:13px;width:5px;height:5px;background:rgb(190,190,190)"></div><div style="left:50px;top:13px;width:5px;height:5px;background:rgb(212,212,212)"></div><div style="left:0px;top:18px;width:5px;height:5px;background:rgb(201,201,201)"></div><div style="left:5px;top:18px;width:5px;height:5px;background:rgb(187,187,187)"></div><div style="left:10px;top:18px;width:5px;height:5px;background:rgb(195,195,195)"></div><div style="left:15px;top:18px;width:5px;height:5px;background:rgb(188,188,188)"></div><div style="left:20px;top:18px;width:5px;height:5px;background:rgb(180,180,180)"></div><div style="left:25px;top:18px;width:5px;height:5px;background:rgb(194,194,194)"></div><div style="left:30px;top:18px;width:5px;height:5px;background:rgb(205,205,205)"></div><div style="left:35px;top:18px;width:5px;height:5px;background:rgb(182,182,182)"></div><div style="left:40px;top:18px;width:5px;height:5px;background:rgb(203,203,203)"></div><div style="left:45px;top:18px;width:5px;height:5px;background:rgb(209,209,209)"></div><div style="left:50px;top:18px;width:5px;height:5px;background:rgb(196,196,196)"></div><div style="left:55px;top:18px;width:5px;height:5px;background:rgb(233,233,233)"></div><div style="left:0px;top:23px;width:5px;height:5px;background:rgb(202,202,202)"></div><div style="left:5px;top:23px;width:5px;height:5px;background:rgb(187,187,187)"></div><div style="left:10px;top:23px;width:5px;height:5px;background:rgb(206,206,206)"></div><div style="left:15px;top:23px;width:5px;height:5px;background:rgb(201,201,201)"></div><div style="left:20px;top:23px;width:5px;height:5px;background:rgb(187,187,187)"></div><div style="left:25px;top:23px;width:5px;height:5px;background:rgb(208,208,208)"></div><div style="left:30px;top:23px;width:5px;height:5px;background:rgb(208,208,208)"></div><div style="left:35px;top:23px;width:5px;height:5px;background:rgb(200,200,200)"></div><div style="left:40px;top:23px;width:5px;height:5px;background:rgb(193,193,193)"></div><div style="left:45px;top:23px;width:5px;height:5px;background:rgb(210,210,210)"></div><div style="left:50px;top:23px;width:5px;height:5px;background:rgb(187,187,187)"></div><div style="left:55px;top:23px;width:5px;height:5px;background:rgb(237,237,237)"></div><div style="left:0px;top:28px;width:5px;height:5px;background:rgb(188,188,188)"></div><div style="left:5px;top:28px;width:5px;height:5px;background:rgb(187,187,187)"></div><div style="left:10px;top:28px;width:5px;height:5px;background:rgb(203,203,203)"></div><div style="left:15px;top:28px;width:5px;height:5px;background:rgb(204,204,204)"></div><div style="left:20px;top:28px;width:5px;height:5px;background:rgb(186,186,186)"></div><div style="left:25px;top:28px;width:5px;height:5px;background:rgb(187,187,187)"></div><div style="left:30px;top:28px;width:5px;height:5px;background:rgb(203,203,203)"></div><div style="left:35px;top:28px;width:5px;height:5px;background:rgb(200,200,200)"></div><div style="left:40px;top:28px;width:5px;height:5px;background:rgb(194,194,194)"></div><div style="left:45px;top:28px;width:5px;height:5px;background:rgb(195,195,195)"></div><div style="left:50px;top:28px;width:5px;height:5px;background:rgb(192,192,192)"></div><div style="left:55px;top:28px;width:5px;height:5px;background:rgb(182,182,182)"></div><div style="left:60px;top:28px;width:5px;height:5px;background:rgb(220,220,220)"></div><div style="left:0px;top:33px;width:5px;height:2px;background:rgb(209,209,209)"></div><div style="left:5px;top:33px;width:5px;height:2px;background:rgb(201,201,201)"></div><div style="left:10px;top:33px;width:5px;height:2px;background:rgb(219,219,219)"></div><div style="left:15px;top:33px;width:5px;height:2px;background:rgb(220,220,220)"></div><div style="left:20px;top:33px;width:5px;height:2px;background:rgb(220,220,220)"></div><div style="left:25px;top:33px;width:5px;height:2px;background:rgb(206,206,206)"></div><div style="left:30px;top:33px;width:5px;height:2px;background:rgb(202,202,202)"></div><div style="left:35px;top:33px;width:5px;height:2px;background:rgb(219,219,219)"></div><div style="left:40px;top:33px;width:5px;height:2px;background:rgb(204,204,204)"></div><div style="left:45px;top:33px;width:5px;height:2px;background:rgb(210,210,210)"></div><div style="left:50px;top:33px;width:5px;height:2px;background:rgb(208,208,208)"></div><div style="left:55px;top:33px;width:5px;height:2px;background:rgb(245,245,245)"></div></div>
<div class="t" style="left:13.7px;top:477.8px;color:#000;font-size:5.8px;line-height:6.3px;transform:scaleX(.92);transform-origin:0 0;">CUERNAVACA,<br>MOR.</div>
<div class="t" style="left:59.5px;top:480.5px;color:#000;font-size:5.8px;line-height:7px;transform:scaleX(.92);transform-origin:0 0;">MUPI</div>
<div class="t" style="left:198.5px;top:480.5px;color:#000;font-size:5.8px;line-height:7px;transform:scaleX(.92);transform-origin:0 0;">MUPI</div>
<div class="t" style="left:265.5px;top:480.5px;color:#000;font-size:5.8px;line-height:7px;transform:scaleX(.92);transform-origin:0 0;">A</div>
<div class="t" style="left:318px;top:480.5px;color:#000;font-size:5.8px;line-height:7px;transform:scaleX(.88);transform-origin:50% 0"><div style="width:33px;text-align:center">01/01/2024</div></div>
<div class="t" style="left:351px;top:480.5px;color:#000;font-size:5.8px;line-height:7px;transform:scaleX(.88);transform-origin:50% 0"><div style="width:34px;text-align:center">08/01/2024</div></div>
<div class="t" style="left:385px;top:480.5px;color:#000;font-size:5.8px;line-height:7px;transform:scaleX(.88);transform-origin:50% 0"><div style="width:65px;text-align:center">$ 2.100,00</div></div>
<div class="t" style="left:450px;top:480.5px;color:#000;font-size:5.8px;line-height:7px;"><div style="width:49px;text-align:center">1</div></div>
<div class="t" style="left:499px;top:480.5px;color:#000;font-size:5.8px;line-height:7px;transform:scaleX(.88);transform-origin:100% 0"><div style="width:57px;text-align:right">$ 2.100,00</div></div>
<div class="t" style="left:629px;top:480.5px;color:#000;font-size:5.8px;line-height:7px">$</div>
<div style="left:132px;top:467px;width:70px;height:23px;overflow:hidden"><div style="left:0px;top:0px;width:5px;height:3px;background:rgb(179,179,179)"></div><div style="left:5px;top:0px;width:5px;height:3px;background:rgb(189,189,189)"></div><div style="left:10px;top:0px;width:5px;height:3px;background:rgb(188,188,188)"></div><div style="left:15px;top:0px;width:5px;height:3px;background:rgb(174,174,174)"></div><div style="left:20px;top:0px;width:5px;height:3px;background:rgb(195,195,195)"></div><div style="left:0px;top:3px;width:5px;height:5px;background:rgb(210,210,210)"></div><div style="left:5px;top:3px;width:5px;height:5px;background:rgb(196,196,196)"></div><div style="left:10px;top:3px;width:5px;height:5px;background:rgb(210,210,210)"></div><div style="left:15px;top:3px;width:5px;height:5px;background:rgb(203,203,203)"></div><div style="left:20px;top:3px;width:5px;height:5px;background:rgb(198,198,198)"></div><div style="left:25px;top:3px;width:5px;height:5px;background:rgb(226,226,226)"></div><div style="left:0px;top:8px;width:5px;height:5px;background:rgb(220,220,220)"></div><div style="left:5px;top:8px;width:5px;height:5px;background:rgb(214,214,214)"></div><div style="left:10px;top:8px;width:5px;height:5px;background:rgb(221,221,221)"></div><div style="left:15px;top:8px;width:5px;height:5px;background:rgb(214,214,214)"></div><div style="left:20px;top:8px;width:5px;height:5px;background:rgb(244,244,244)"></div><div style="left:0px;top:13px;width:5px;height:5px;background:rgb(184,184,184)"></div><div style="left:5px;top:13px;width:5px;height:5px;background:rgb(184,184,184)"></div><div style="left:10px;top:13px;width:5px;height:5px;background:rgb(194,194,194)"></div><div style="left:15px;top:13px;width:5px;height:5px;background:rgb(173,173,173)"></div><div style="left:20px;top:13px;width:5px;height:5px;background:rgb(187,187,187)"></div><div style="left:25px;top:13px;width:5px;height:5px;background:rgb(176,176,176)"></div><div style="left:30px;top:13px;width:5px;height:5px;background:rgb(179,179,179)"></div><div style="left:35px;top:13px;width:5px;height:5px;background:rgb(172,172,172)"></div><div style="left:40px;top:13px;width:5px;height:5px;background:rgb(185,185,185)"></div><div style="left:45px;top:13px;width:5px;height:5px;background:rgb(170,170,170)"></div><div style="left:50px;top:13px;width:5px;height:5px;background:rgb(204,204,204)"></div><div style="left:0px;top:18px;width:5px;height:5px;background:rgb(194,194,194)"></div><div style="left:5px;top:18px;width:5px;height:5px;background:rgb(182,182,182)"></div><div style="left:10px;top:18px;width:5px;height:5px;background:rgb(206,206,206)"></div><div style="left:15px;top:18px;width:5px;height:5px;background:rgb(196,196,196)"></div><div style="left:20px;top:18px;width:5px;height:5px;background:rgb(210,210,210)"></div><div style="left:25px;top:18px;width:5px;height:5px;background:rgb(194,194,194)"></div><div style="left:30px;top:18px;width:5px;height:5px;background:rgb(188,188,188)"></div><div style="left:35px;top:18px;width:5px;height:5px;background:rgb(192,192,192)"></div><div style="left:40px;top:18px;width:5px;height:5px;background:rgb(186,186,186)"></div><div style="left:45px;top:18px;width:5px;height:5px;background:rgb(209,209,209)"></div><div style="left:50px;top:18px;width:5px;height:5px;background:rgb(210,210,210)"></div><div style="left:55px;top:18px;width:5px;height:5px;background:rgb(234,234,234)"></div><div style="left:0px;top:23px;width:5px;height:5px;background:rgb(191,191,191)"></div><div style="left:5px;top:23px;width:5px;height:5px;background:rgb(187,187,187)"></div><div style="left:10px;top:23px;width:5px;height:5px;background:rgb(203,203,203)"></div><div style="left:15px;top:23px;width:5px;height:5px;background:rgb(187,187,187)"></div><div style="left:20px;top:23px;width:5px;height:5px;background:rgb(189,189,189)"></div><div style="left:25px;top:23px;width:5px;height:5px;background:rgb(208,208,208)"></div><div style="left:30px;top:23px;width:5px;height:5px;background:rgb(201,201,201)"></div><div style="left:35px;top:23px;width:5px;height:5px;background:rgb(193,193,193)"></div><div style="left:40px;top:23px;width:5px;height:5px;background:rgb(215,215,215)"></div><div style="left:45px;top:23px;width:5px;height:5px;background:rgb(196,196,196)"></div><div style="left:50px;top:23px;width:5px;height:5px;background:rgb(189,189,189)"></div><div style="left:55px;top:23px;width:5px;height:5px;background:rgb(229,229,229)"></div><div style="left:0px;top:28px;width:5px;height:5px;background:rgb(200,200,200)"></div><div style="left:5px;top:28px;width:5px;height:5px;background:rgb(196,196,196)"></div><div style="left:10px;top:28px;width:5px;height:5px;background:rgb(188,188,188)"></div><div style="left:15px;top:28px;width:5px;height:5px;background:rgb(183,183,183)"></div><div style="left:20px;top:28px;width:5px;height:5px;background:rgb(202,202,202)"></div><div style="left:25px;top:28px;width:5px;height:5px;background:rgb(191,191,191)"></div><div style="left:30px;top:28px;width:5px;height:5px;background:rgb(187,187,187)"></div><div style="left:35px;top:28px;width:5px;height:5px;background:rgb(195,195,195)"></div><div style="left:40px;top:28px;width:5px;height:5px;background:rgb(195,195,195)"></div><div style="left:45px;top:28px;width:5px;height:5px;background:rgb(192,192,192)"></div><div style="left:50px;top:28px;width:5px;height:5px;background:rgb(180,180,180)"></div><div style="left:55px;top:28px;width:5px;height:5px;background:rgb(185,185,185)"></div><div style="left:60px;top:28px;width:5px;height:5px;background:rgb(205,205,205)"></div><div style="left:0px;top:33px;width:5px;height:2px;background:rgb(215,215,215)"></div><div style="left:5px;top:33px;width:5px;height:2px;background:rgb(214,214,214)"></div><div style="left:10px;top:33px;width:5px;height:2px;background:rgb(212,212,212)"></div><div style="left:15px;top:33px;width:5px;height:2px;background:rgb(209,209,209)"></div><div style="left:20px;top:33px;width:5px;height:2px;background:rgb(204,204,204)"></div><div style="left:25px;top:33px;width:5px;height:2px;background:rgb(213,213,213)"></div><div style="left:30px;top:33px;width:5px;height:2px;background:rgb(211,211,211)"></div><div style="left:35px;top:33px;width:5px;height:2px;background:rgb(212,212,212)"></div><div style="left:40px;top:33px;width:5px;height:2px;background:rgb(210,210,210)"></div><div style="left:45px;top:33px;width:5px;height:2px;background:rgb(203,203,203)"></div><div style="left:50px;top:33px;width:5px;height:2px;background:rgb(210,210,210)"></div><div style="left:55px;top:33px;width:5px;height:2px;background:rgb(225,225,225)"></div></div>
<div style="left:58px;top:257px;width:1px;height:233px;background:#4a4a4a"></div>
<div style="left:131px;top:257px;width:1px;height:233px;background:#4a4a4a"></div>
<div style="left:197px;top:257px;width:1px;height:233px;background:#4a4a4a"></div>
<div style="left:264px;top:257px;width:1px;height:233px;background:#4a4a4a"></div>
<div style="left:318px;top:257px;width:1px;height:233px;background:#4a4a4a"></div>
<div style="left:351px;top:257px;width:1px;height:233px;background:#4a4a4a"></div>
<div style="left:385px;top:257px;width:1px;height:233px;background:#4a4a4a"></div>
<div style="left:450px;top:257px;width:1px;height:233px;background:#4a4a4a"></div>
<div style="left:499px;top:257px;width:1px;height:233px;background:#4a4a4a"></div>
<div style="left:557px;top:257px;width:1px;height:233px;background:#4a4a4a"></div>
<div style="left:606px;top:257px;width:1px;height:233px;background:#4a4a4a"></div>
<div style="left:654px;top:257px;width:1px;height:233px;background:#4a4a4a"></div>
<div style="left:0px;top:490px;width:715px;height:12px;background:#e6e6e6"></div>
<div style="left:0px;top:490px;width:715px;height:1px;background:#d0d0d0"></div>
<div class="t" style="left:13px;top:492px;color:#aaa;font-size:7px;line-height:8px">&#8249;&nbsp;&nbsp;&nbsp;&nbsp;&#8250;</div>
<div style="left:51px;top:490px;width:85px;height:12px;background:#fff"></div>
<div class="t" style="left:56.00px;top:492px;color:#1e7145;font-weight:bold;font-size:7.5px;line-height:9px;transform:scaleX(0.8490);transform-origin:0 0;"><span id="m55">Orden 1961 mes 01 2024</span></div>
<div style="left:136px;top:493px;width:1px;height:7px;background:#bbb"></div>
<div class="t" style="left:143.00px;top:492px;color:#444;font-size:7.5px;line-height:9px;transform:scaleX(0.8793);transform-origin:0 0;"><span id="m56">Anexo de la Orden</span></div>
<div style="left:204px;top:493px;width:1px;height:7px;background:#bbb"></div>
<svg style="position:absolute;left:221px;top:493px" width="9" height="9" viewBox="0 0 9 9"><circle cx="4.5" cy="4.5" r="3.8" fill="none" stroke="#666" stroke-width="0.8"/><path d="M4.5 2.5 V6.5 M2.5 4.5 H6.5" stroke="#666" stroke-width="0.8"/></svg>
<div class="t" style="left:571px;top:493.5px;color:#aaa;font-size:7px;line-height:8px">&#8942;</div>
<div style="left:580px;top:494px;width:8px;height:7.5px;background:#fff;border:1px solid #aaa;box-sizing:border-box"></div>
<div class="t" style="left:582px;top:494px;color:#222;font-size:4px;line-height:8px">&#9664;</div>
<div style="left:588px;top:494px;width:45px;height:7.5px;background:#fff;border-top:1px solid #bbb;border-bottom:1px solid #bbb;box-sizing:border-box"></div>
<div style="left:633px;top:125px;width:415px;height:44px;background:#fff"></div>
<div style="left:699px;top:123px;width:349px;height:2px;background:#fff"></div>
<svg style="position:absolute;left:634px;top:126.4px" width="12" height="11" viewBox="0 0 12 11"><path d="M1.2 4.2 L9.8 1.2 L8.3 9.6 Z" fill="#1a6fb5" stroke="#1a6fb5" stroke-width="1.8" stroke-linejoin="round"/><circle cx="6.3" cy="5" r="1.9" fill="#fff"/></svg>
<div style="left:647px;top:129px;width:49px;height:6px;overflow:hidden"><div style="left:0px;top:0px;width:4px;height:4px;background:rgb(195,195,195)"></div><div style="left:4px;top:0px;width:4px;height:4px;background:rgb(200,200,200)"></div><div style="left:8px;top:0px;width:4px;height:4px;background:rgb(187,187,187)"></div><div style="left:12px;top:0px;width:4px;height:4px;background:rgb(193,193,193)"></div><div style="left:16px;top:0px;width:4px;height:4px;background:rgb(179,179,179)"></div><div style="left:20px;top:0px;width:4px;height:4px;background:rgb(212,212,212)"></div><div style="left:24px;top:0px;width:4px;height:4px;background:rgb(202,202,202)"></div><div style="left:28px;top:0px;width:4px;height:4px;background:rgb(178,178,178)"></div><div style="left:32px;top:0px;width:4px;height:4px;background:rgb(178,178,178)"></div><div style="left:36px;top:0px;width:4px;height:4px;background:rgb(193,193,193)"></div><div style="left:40px;top:0px;width:4px;height:4px;background:rgb(184,184,184)"></div><div style="left:44px;top:0px;width:4px;height:4px;background:rgb(192,192,192)"></div><div style="left:48px;top:0px;width:1px;height:4px;background:rgb(195,195,195)"></div><div style="left:0px;top:4px;width:4px;height:2px;background:rgb(198,198,198)"></div><div style="left:4px;top:4px;width:4px;height:2px;background:rgb(202,202,202)"></div><div style="left:8px;top:4px;width:4px;height:2px;background:rgb(215,215,215)"></div><div style="left:12px;top:4px;width:4px;height:2px;background:rgb(210,210,210)"></div><div style="left:16px;top:4px;width:4px;height:2px;background:rgb(180,180,180)"></div><div style="left:20px;top:4px;width:4px;height:2px;background:rgb(201,201,201)"></div><div style="left:24px;top:4px;width:4px;height:2px;background:rgb(183,183,183)"></div><div style="left:28px;top:4px;width:4px;height:2px;background:rgb(193,193,193)"></div><div style="left:32px;top:4px;width:4px;height:2px;background:rgb(210,210,210)"></div><div style="left:36px;top:4px;width:4px;height:2px;background:rgb(205,205,205)"></div><div style="left:40px;top:4px;width:4px;height:2px;background:rgb(193,193,193)"></div><div style="left:44px;top:4px;width:4px;height:2px;background:rgb(191,191,191)"></div><div style="left:48px;top:4px;width:1px;height:2px;background:rgb(190,190,190)"></div></div>
<div class="t" style="left:697px;top:128px;color:#777;font-size:8px;line-height:9px">·</div>
<div class="t" style="left:701.00px;top:126.8px;color:#222;font-size:8.5px;line-height:10px;transform:scaleX(0.8858);transform-origin:0 0;"><span id="m57">[Contratos de Compra de Medios]</span></div>
<div style="left:633px;top:169px;width:412px;height:352px;background:#e6e6e6"></div>
<div style="left:633px;top:169px;width:412px;height:15px;background:#f4f4f4"></div>
<svg style="position:absolute;left:633px;top:170px" width="142" height="15" viewBox="0 0 142 15"><defs><linearGradient id="tg" x1="0" y1="0" x2="0" y2="1"><stop offset="0" stop-color="#e9eef8"/><stop offset="1" stop-color="#a9bfe6"/></linearGradient></defs><path d="M2 15 L14 2 Q15 1 17 1 L139 1 Q141 1 141 3 L141 15 Z" fill="url(#tg)" stroke="#8da3c8" stroke-width="1"/></svg>
<svg style="position:absolute;left:648.5px;top:171.6px" width="12" height="11" viewBox="0 0 12 11"><path d="M1.2 4.2 L9.8 1.2 L8.3 9.6 Z" fill="#1a6fb5" stroke="#1a6fb5" stroke-width="1.8" stroke-linejoin="round"/><circle cx="6.3" cy="5" r="1.9" fill="#fff"/></svg>
<div class="t" style="left:660.40px;top:172.3px;color:#111;font-weight:bold;font-size:9px;line-height:10px;transform:scaleX(0.7985);transform-origin:0 0;"><span id="m58">Contratos de Compra de Medios</span></div>
<div style="left:633px;top:184px;width:412px;height:36px;background:#1e6fb7"></div>
<div style="left:638px;top:188px;width:1px;height:1px;background:#8fb5dc"></div>
<div style="left:638px;top:191px;width:1px;height:1px;background:#8fb5dc"></div>
<div style="left:638px;top:194px;width:1px;height:1px;background:#8fb5dc"></div>
<div style="left:638px;top:197px;width:1px;height:1px;background:#8fb5dc"></div>
<div style="left:638px;top:200px;width:1px;height:1px;background:#8fb5dc"></div>
<div style="left:638px;top:203px;width:1px;height:1px;background:#8fb5dc"></div>
<div style="left:638px;top:206px;width:1px;height:1px;background:#8fb5dc"></div>
<div style="left:638px;top:209px;width:1px;height:1px;background:#8fb5dc"></div>
<div style="left:638px;top:212px;width:1px;height:1px;background:#8fb5dc"></div>
<div style="left:638px;top:215px;width:1px;height:1px;background:#8fb5dc"></div>
<svg style="position:absolute;left:647px;top:187px" width="18" height="21" viewBox="0 0 18 21"><path d="M1 1 L11 1 L16 6 L16 20 L1 20 Z" fill="#fff"/><path d="M11 1 L11 6 L16 6" fill="none" stroke="#1e6fb7" stroke-width="1"/><rect x="3" y="10" width="9" height="1.2" fill="#1e6fb7" opacity="0.8"/><rect x="3" y="13" width="9" height="1.2" fill="#1e6fb7" opacity="0.8"/><rect x="3" y="16" width="9" height="1.2" fill="#1e6fb7" opacity="0.8"/></svg>
<svg style="position:absolute;left:656px;top:193px" width="12" height="12"><circle cx="6" cy="6" r="5.5" fill="#6cbb3c" stroke="#fff" stroke-width="1"/><rect x="3" y="5.2" width="6" height="1.6" fill="#fff"/><rect x="5.2" y="3" width="1.6" height="6" fill="#fff"/></svg>
<div class="t" style="left:646.70px;top:207.6px;color:#fff;font-size:8px;line-height:10px;transform:scaleX(0.8519);transform-origin:0 0;"><span id="m59">Nuevo</span></div>
<svg style="position:absolute;left:681px;top:187px" width="18" height="21" viewBox="0 0 18 21"><path d="M1 1 L11 1 L16 6 L16 20 L1 20 Z" fill="#cfd3d8"/><path d="M11 1 L11 6 L16 6" fill="none" stroke="#1e6fb7" stroke-width="1"/><rect x="3" y="10" width="9" height="1.2" fill="#1e6fb7" opacity="0.8"/><rect x="3" y="13" width="9" height="1.2" fill="#1e6fb7" opacity="0.8"/><rect x="3" y="16" width="9" height="1.2" fill="#1e6fb7" opacity="0.8"/></svg>
<svg style="position:absolute;left:690px;top:193px" width="12" height="12"><circle cx="6" cy="6" r="5.5" fill="#cfd3d8" stroke="#1e6fb7" stroke-width="0.8"/><text x="6" y="9" font-size="8" text-anchor="middle" fill="#3a9ad9" font-family="Liberation Sans" font-weight="bold">?</text></svg>
<div class="t" style="left:677.00px;top:207.6px;color:#7ea8d3;font-size:8px;line-height:10px;transform:scaleX(0.8392);transform-origin:0 0;"><span id="m60">Consulta</span></div>
<svg style="position:absolute;left:715px;top:187px" width="20" height="21" viewBox="0 0 20 21"><path d="M2 4 L2 19 Q2 20 3 20 L13 20" fill="none" stroke="#fff" stroke-width="1.6"/><path d="M5 1.5 L13 1.5 L17.5 6 L17.5 17.5 L5 17.5 Z" fill="#1e6fb7" stroke="#fff" stroke-width="1.6" stroke-linejoin="round"/><path d="M13 1.5 L13 6 L17.5 6" fill="#fff" stroke="#fff" stroke-width="1"/></svg>
<div class="t" style="left:714.00px;top:207.6px;color:#fff;font-size:8px;line-height:10px;transform:scaleX(0.8482);transform-origin:0 0;"><span id="m61">Copiar</span></div>
<svg style="position:absolute;left:747px;top:187px" width="21" height="20" viewBox="0 0 21 20"><path d="M2 0 L19 0 Q21 0 21 2 L21 18 Q21 20 19 20 L2 20 Q0 20 0 18 L0 2 Q0 0 2 0Z" fill="#c9ccd1"/><rect x="6" y="0" width="9" height="5" fill="#1e6fb7"/><rect x="7.5" y="0" width="6" height="4" fill="#c9ccd1"/><circle cx="10.5" cy="12" r="3" fill="none" stroke="#1e6fb7" stroke-width="1.3"/></svg>
<div class="t" style="left:746.80px;top:207.6px;color:#7ea8d3;font-size:8px;line-height:10px;transform:scaleX(0.8793);transform-origin:0 0;"><span id="m62">Grabar</span></div>
<svg style="position:absolute;left:782px;top:187px" width="18" height="21" viewBox="0 0 18 21"><path d="M1 1 L11 1 L16 6 L16 20 L1 20 Z" fill="#fff"/><path d="M11 1 L11 6 L16 6" fill="none" stroke="#1e6fb7" stroke-width="1"/><rect x="3" y="10" width="9" height="1.2" fill="#1e6fb7" opacity="0.8"/><rect x="3" y="13" width="9" height="1.2" fill="#1e6fb7" opacity="0.8"/><rect x="3" y="16" width="9" height="1.2" fill="#1e6fb7" opacity="0.8"/></svg>
<svg style="position:absolute;left:792px;top:193px" width="12" height="12"><circle cx="6" cy="6" r="5.5" fill="#e8502d" stroke="#fff" stroke-width="1"/><path d="M3.8 3.8 L8.2 8.2 M8.2 3.8 L3.8 8.2" stroke="#fff" stroke-width="1.5"/></svg>
<div class="t" style="left:779.70px;top:207.6px;color:#fff;font-size:8px;line-height:10px;transform:scaleX(0.8268);transform-origin:0 0;"><span id="m63">Eliminar</span></div>
<svg style="position:absolute;left:816px;top:187px" width="22" height="21" viewBox="0 0 22 21"><path d="M1 3 L10 3 L10 20 L1 20 Z" fill="#fff"/><rect x="2.5" y="8" width="6" height="1.2" fill="#1e6fb7"/><rect x="2.5" y="11" width="6" height="1.2" fill="#1e6fb7"/><rect x="2.5" y="14" width="6" height="1.2" fill="#1e6fb7"/><path d="M9 4 L13 2 L17 13 L13 16 Z" fill="#fff"/><path d="M16 1 L20 3 L13 18 L10 17 Z" fill="#fff" stroke="#1e6fb7" stroke-width="0.6"/><path d="M16 1 L20 3 L19 5 L15 3 Z" fill="#7cc242"/><path d="M10 17 L13 18 L10.5 20.5 Z" fill="#7cc242"/></svg>
<div class="t" style="left:812.20px;top:207.6px;color:#fff;font-size:8px;line-height:10px;transform:scaleX(0.8874);transform-origin:0 0;"><span id="m64">Modificar</span></div>
<svg style="position:absolute;left:850px;top:189px" width="23" height="17" viewBox="0 0 23 17"><rect x="5" y="0" width="13" height="4" rx="1" fill="none" stroke="#fff" stroke-width="1.4"/><path d="M1 5 Q1 4 2 4 L21 4 Q22 4 22 5 L22 11 L1 11 Z" fill="#fff"/><rect x="6" y="11" width="11" height="5" fill="#7cc242"/></svg>
<div class="t" style="left:849.00px;top:207.6px;color:#fff;font-size:8px;line-height:10px;transform:scaleX(0.8619);transform-origin:0 0;"><span id="m65">Imprimir</span></div>
<svg style="position:absolute;left:885px;top:187px" width="18" height="21" viewBox="0 0 18 21"><path d="M1 1 L11 1 L16 6 L16 20 L1 20 Z" fill="#fff"/><path d="M11 1 L11 6 L16 6" fill="none" stroke="#1e6fb7" stroke-width="1"/><rect x="3" y="10" width="9" height="1.2" fill="#1e6fb7" opacity="0.8"/><rect x="3" y="13" width="9" height="1.2" fill="#1e6fb7" opacity="0.8"/><rect x="3" y="16" width="9" height="1.2" fill="#1e6fb7" opacity="0.8"/></svg>
<svg style="position:absolute;left:895px;top:193px" width="12" height="12"><circle cx="6" cy="6" r="5.5" fill="#7cc242" stroke="#fff" stroke-width="1"/><path d="M5 9 L7.5 3.5" stroke="#fff" stroke-width="1.4" stroke-linecap="round"/></svg>
<div class="t" style="left:881.90px;top:207.6px;color:#fff;font-size:8px;line-height:10px;transform:scaleX(0.9028);transform-origin:0 0;"><span id="m66">Adjuntar</span></div>
<svg style="position:absolute;left:919px;top:187px" width="21" height="21"><circle cx="10.5" cy="10.5" r="9.5" fill="#e8502d" stroke="#fff" stroke-width="1.8"/><path d="M6.8 6.8 L14.2 14.2 M14.2 6.8 L6.8 14.2" stroke="#fff" stroke-width="2.4"/></svg>
<div class="t" style="left:915.60px;top:207.6px;color:#fff;font-size:8px;line-height:10px;transform:scaleX(0.8402);transform-origin:0 0;"><span id="m67">Cancelar</span></div>
<svg style="position:absolute;left:967px;top:187px" width="21" height="21"><circle cx="10.5" cy="10.5" r="9.5" fill="#e9dc6a" stroke="#fff" stroke-width="1.8"/><path d="M10.5 4 L14 10 L10.5 17 L7 10 Z" fill="none" stroke="#9cc26a" stroke-width="1"/><path d="M7 10 L14 10" stroke="#9cc26a" stroke-width="0.8"/></svg>
<div class="t" style="left:949.20px;top:207.6px;color:#fff;font-size:8px;line-height:10px;transform:scaleX(0.8485);transform-origin:0 0;"><span id="m68">Sistemas Externos</span></div>
<div style="left:1011px;top:187px;width:1px;height:29px;background:#a9c8e6"></div>
<svg style="position:absolute;left:1019px;top:187px" width="22" height="20" viewBox="0 0 22 20"><path d="M1 5 L10 5 L11 6 L12 5 L21 5 L21 17 L12 17 L11 18 L10 17 L1 17 Z" fill="#fff"/><path d="M11 6 L11 17" stroke="#1e6fb7" stroke-width="0.8"/><rect x="3" y="8" width="6" height="1" fill="#1e6fb7"/><rect x="3" y="11" width="6" height="1" fill="#1e6fb7"/><rect x="3" y="14" width="6" height="1" fill="#1e6fb7"/><rect x="13" y="11" width="6" height="1" fill="#1e6fb7"/><rect x="13" y="14" width="6" height="1" fill="#1e6fb7"/><circle cx="17" cy="4" r="3.8" fill="#7cc242" stroke="#fff" stroke-width="0.8"/><rect x="16.5" y="2.3" width="1" height="3.5" fill="#fff"/></svg>
<div class="t" style="left:1020.70px;top:207.6px;color:#fff;font-size:8px;line-height:10px;transform:scaleX(0.8116);transform-origin:0 0;"><span id="m69">Ayuda</span></div>
<div style="left:633px;top:220px;width:412px;height:301px;background:#f3f3f3"></div>
<div style="left:633px;top:169px;width:1px;height:352px;background:#9fb3d1"></div>
<div style="left:634px;top:221px;width:12px;height:49px;background:#f0f0f0;border:1px solid #c4c4c4;border-left:0;border-radius:0 3px 3px 0;box-sizing:border-box"></div>
<div class="t" style="left:646px;top:224.5px;height:11px;transform-origin:0 0;transform:rotate(90deg) scaleX(0.8230);color:#5a5a5a;font-size:8.5px;line-height:11px"><span id="m70">Herramientas</span></div>
<div style="left:634px;top:278px;width:12px;height:57px;background:#f0f0f0;border:1px solid #c4c4c4;border-left:0;border-radius:0 3px 3px 0;box-sizing:border-box"></div>
<div class="t" style="left:646px;top:281.3px;height:11px;transform-origin:0 0;transform:rotate(90deg) scaleX(0.8203);color:#5a5a5a;font-size:8.5px;line-height:11px"><span id="m71">Configuraciones</span></div>
<div style="left:659px;top:246px;width:386px;height:275px;background:#e6e6e6"></div>
<div style="left:659px;top:246px;width:386px;height:1px;background:#aab2b8"></div>
<div style="left:659px;top:246px;width:1px;height:275px;background:#aab2b8"></div>
<svg style="position:absolute;left:659px;top:231px" width="78" height="17" viewBox="0 0 78 17"><path d="M0.5 17 L0.5 5 Q0.5 0.5 5 0.5 L73 0.5 Q77.5 0.5 77.5 5 L77.5 17" fill="#e6e6e6" stroke="#aab2b8" stroke-width="1"/></svg>
<div class="t" style="left:665.70px;top:235.2px;color:#555;font-size:9px;line-height:10px;transform:scaleX(0.8896);transform-origin:0 0;"><span id="m72">Datos Principales</span></div>
<div style="left:665px;top:262px;width:380px;height:1px;background:#5b93c9"></div>
<div class="t" style="left:675.20px;top:299.7px;color:#5a5a5a;font-weight:bold;font-size:8.5px;line-height:10px;transform:scaleX(0.8856);transform-origin:0 0;"><span id="m73">Cliente</span></div>
<div class="t" style="left:675.20px;top:314.7px;color:#5a5a5a;font-weight:bold;font-size:8.5px;line-height:10px;transform:scaleX(0.8633);transform-origin:0 0;"><span id="m74">Proveedor</span></div>
<div class="t" style="left:675.20px;top:329.6px;color:#5a5a5a;font-weight:bold;font-size:8.5px;line-height:10px;transform:scaleX(0.8950);transform-origin:0 0;"><span id="m75">Tipo de Medio</span></div>
<div class="t" style="left:675.20px;top:344.5px;color:#5a5a5a;font-weight:bold;font-size:8.5px;line-height:10px;transform:scaleX(0.9073);transform-origin:0 0;"><span id="m76">Nº de Contrato</span></div>
<div class="t" style="left:675.20px;top:359.4px;color:#5a5a5a;font-weight:bold;font-size:8.5px;line-height:10px;transform:scaleX(0.8570);transform-origin:0 0;"><span id="m77">Descripción</span></div>
<div class="t" style="left:675.20px;top:374.5px;color:#5a5a5a;font-weight:bold;font-size:8.5px;line-height:10px;transform:scaleX(0.9003);transform-origin:0 0;"><span id="m78">Vigente</span></div>
<div class="t" style="left:675.20px;top:389.2px;color:#5a5a5a;font-weight:bold;font-size:8.5px;line-height:10px;transform:scaleX(0.8926);transform-origin:0 0;"><span id="m79">Inicio Vigencia</span></div>
<div class="t" style="left:675.20px;top:404.6px;color:#5a5a5a;font-weight:bold;font-size:8.5px;line-height:10px;transform:scaleX(0.8990);transform-origin:0 0;"><span id="m80">Tipo</span></div>
<div class="t" style="left:675.20px;top:419.4px;color:#5a5a5a;font-weight:bold;font-size:8.5px;line-height:10px;transform:scaleX(0.8796);transform-origin:0 0;"><span id="m81">Tipo de Consumo</span></div>
<div class="t" style="left:675.20px;top:434.3px;color:#5a5a5a;font-weight:bold;font-size:8.5px;line-height:10px;transform:scaleX(0.8695);transform-origin:0 0;"><span id="m82">Observaciones</span></div>
<div style="left:761px;top:298px;width:157px;height:13px;background:#fff;border:1px solid #767676;box-sizing:border-box"></div>
<div style="left:908px;top:299px;width:9px;height:11px;background:#ececec"></div>
<svg style="position:absolute;left:909px;top:303px" width="6" height="4" viewBox="0 0 6 4"><path d="M0 0 H6 L3 3.5 Z" fill="#111"/></svg>
<div style="left:763px;top:301px;width:70px;height:7px;overflow:hidden"><div style="left:0px;top:0px;width:5px;height:3px;background:rgb(217,217,217)"></div><div style="left:5px;top:0px;width:5px;height:3px;background:rgb(221,221,221)"></div><div style="left:10px;top:0px;width:5px;height:3px;background:rgb(212,212,212)"></div><div style="left:15px;top:0px;width:5px;height:3px;background:rgb(203,203,203)"></div><div style="left:20px;top:0px;width:5px;height:3px;background:rgb(205,205,205)"></div><div style="left:25px;top:0px;width:5px;height:3px;background:rgb(245,245,245)"></div><div style="left:0px;top:3px;width:5px;height:4px;background:rgb(210,210,210)"></div><div style="left:5px;top:3px;width:5px;height:4px;background:rgb(207,207,207)"></div><div style="left:10px;top:3px;width:5px;height:4px;background:rgb(211,211,211)"></div><div style="left:15px;top:3px;width:5px;height:4px;background:rgb(221,221,221)"></div><div style="left:20px;top:3px;width:5px;height:4px;background:rgb(230,230,230)"></div><div style="left:25px;top:3px;width:5px;height:4px;background:rgb(245,245,245)"></div></div>
<div style="left:791px;top:301px;width:70px;height:7px;overflow:hidden"><div style="left:0px;top:0px;width:5px;height:3px;background:rgb(243,243,243)"></div><div style="left:5px;top:0px;width:5px;height:3px;background:rgb(238,238,238)"></div><div style="left:10px;top:0px;width:5px;height:3px;background:rgb(242,242,242)"></div><div style="left:15px;top:0px;width:5px;height:3px;background:rgb(250,250,250)"></div><div style="left:0px;top:3px;width:5px;height:4px;background:rgb(245,245,245)"></div><div style="left:5px;top:3px;width:5px;height:4px;background:rgb(244,244,244)"></div><div style="left:10px;top:3px;width:5px;height:4px;background:rgb(240,240,240)"></div><div style="left:15px;top:3px;width:5px;height:4px;background:rgb(250,250,250)"></div></div>
<div style="left:806px;top:301px;width:70px;height:7px;overflow:hidden"><div style="left:0px;top:0px;width:5px;height:7px;background:rgb(211,211,211)"></div><div style="left:5px;top:0px;width:5px;height:7px;background:rgb(212,212,212)"></div><div style="left:10px;top:0px;width:5px;height:7px;background:rgb(232,232,232)"></div></div>
<div style="left:761px;top:313px;width:157px;height:13px;background:#fff;border:1px solid #767676;box-sizing:border-box"></div>
<div style="left:908px;top:314px;width:9px;height:11px;background:#ececec"></div>
<svg style="position:absolute;left:909px;top:318px" width="6" height="4" viewBox="0 0 6 4"><path d="M0 0 H6 L3 3.5 Z" fill="#111"/></svg>
<div style="left:763px;top:316px;width:70px;height:7px;overflow:hidden"><div style="left:0px;top:0px;width:5px;height:3px;background:rgb(210,210,210)"></div><div style="left:5px;top:0px;width:5px;height:3px;background:rgb(240,240,240)"></div><div style="left:0px;top:3px;width:5px;height:4px;background:rgb(232,232,232)"></div><div style="left:5px;top:3px;width:5px;height:4px;background:rgb(242,242,242)"></div></div>
<div style="left:773px;top:316px;width:70px;height:7px;overflow:hidden"><div style="left:0px;top:0px;width:5px;height:3px;background:rgb(220,220,220)"></div><div style="left:5px;top:0px;width:5px;height:3px;background:rgb(217,217,217)"></div><div style="left:10px;top:0px;width:5px;height:3px;background:rgb(221,221,221)"></div><div style="left:15px;top:0px;width:5px;height:3px;background:rgb(218,218,218)"></div><div style="left:20px;top:0px;width:5px;height:3px;background:rgb(228,228,228)"></div><div style="left:25px;top:0px;width:5px;height:3px;background:rgb(241,241,241)"></div><div style="left:0px;top:3px;width:5px;height:4px;background:rgb(200,200,200)"></div><div style="left:5px;top:3px;width:5px;height:4px;background:rgb(223,223,223)"></div><div style="left:10px;top:3px;width:5px;height:4px;background:rgb(213,213,213)"></div><div style="left:15px;top:3px;width:5px;height:4px;background:rgb(212,212,212)"></div><div style="left:20px;top:3px;width:5px;height:4px;background:rgb(213,213,213)"></div><div style="left:25px;top:3px;width:5px;height:4px;background:rgb(248,248,248)"></div></div>
<div style="left:803px;top:316px;width:70px;height:7px;overflow:hidden"><div style="left:0px;top:0px;width:5px;height:7px;background:rgb(231,231,231)"></div><div style="left:5px;top:0px;width:5px;height:7px;background:rgb(221,221,221)"></div><div style="left:10px;top:0px;width:5px;height:7px;background:rgb(227,227,227)"></div><div style="left:15px;top:0px;width:5px;height:7px;background:rgb(223,223,223)"></div><div style="left:20px;top:0px;width:5px;height:7px;background:rgb(250,250,250)"></div></div>
<div style="left:761px;top:328px;width:157px;height:14px;background:#efefef;border:1px solid #767676;box-sizing:border-box"></div>
<div class="t" style="left:762.50px;top:330px;color:#aaa;font-size:8px;line-height:10px;transform:scaleX(0.7406);transform-origin:0 0;"><span id="m83">EXTERIORES</span></div>
<svg style="position:absolute;left:909px;top:333.5px" width="5" height="3" viewBox="0 0 5 3"><path d="M0 0 H5 L2.5 3 Z" fill="#aaa"/></svg>
<div style="left:761px;top:343px;width:81px;height:13px;background:#fff;border:1px solid #767676;box-sizing:border-box"></div>
<div style="left:762px;top:344px;width:9px;height:11px;background:#e6e6e6"></div>
<div style="left:832px;top:344px;width:9px;height:11px;background:#e6e6e6"></div>
<svg style="position:absolute;left:763.5px;top:348px" width="6" height="4" viewBox="0 0 6 4"><path d="M0 0 H6 L3 3.5 Z" fill="#111"/></svg>
<svg style="position:absolute;left:833.5px;top:348px" width="6" height="4" viewBox="0 0 6 4"><path d="M0 0 H6 L3 3.5 Z" fill="#111"/></svg>
<div class="t" style="left:793.60px;top:345px;color:#444;font-size:8px;line-height:10px;transform:scaleX(0.8091);transform-origin:0 0;"><span id="m84">2582</span></div>
<div style="left:761px;top:358px;width:157px;height:14px;background:#efefef;border:1px solid #767676;box-sizing:border-box"></div>
<div class="t" style="left:762.50px;top:360px;color:#aaa;font-size:8px;line-height:10px;transform:scaleX(0.7861);transform-origin:0 0;"><span id="m85">2024_FDRC_LOC_DF_R9</span></div>
<div style="left:666.6px;top:340.5px;width:199px;height:32.5px;border:2px solid #1ee61e;box-sizing:border-box"></div>
<svg style="position:absolute;left:762px;top:375.5px" width="9" height="9"><circle cx="4.5" cy="4.5" r="3.9" fill="#fafafa" stroke="#3c6e98" stroke-width="0.9"/><circle cx="4.5" cy="4.5" r="1.6" fill="#2a9a3a"/></svg>
<div class="t" style="left:773.50px;top:374.8px;color:#555;font-size:8.5px;line-height:10px;transform:scaleX(0.7471);transform-origin:0 0;"><span id="m86">SI</span></div>
<svg style="position:absolute;left:794px;top:375.5px" width="9" height="9"><circle cx="4.5" cy="4.5" r="3.9" fill="#fafafa" stroke="#3c6e98" stroke-width="0.9"/></svg>
<div class="t" style="left:804.60px;top:374.8px;color:#555;font-size:8.5px;line-height:10px;transform:scaleX(0.8784);transform-origin:0 0;"><span id="m87">NO</span></div>
<div style="left:761px;top:388px;width:54px;height:13.5px;background:#efefef;border:1px solid #767676;box-sizing:border-box"></div>
<div class="t" style="left:762.50px;top:390px;color:#aaa;font-size:8px;line-height:10px;transform:scaleX(0.9464);transform-origin:0 0;"><span id="m88">01/01/2024</span></div>
<svg style="position:absolute;left:806px;top:393.5px" width="5" height="3" viewBox="0 0 5 3"><path d="M0 0 H5 L2.5 3 Z" fill="#aaa"/></svg>
<div class="t" style="left:835.00px;top:389.2px;color:#5a5a5a;font-weight:bold;font-size:8.5px;line-height:10px;transform:scaleX(0.9098);transform-origin:0 0;"><span id="m89">Fin</span></div>
<div style="left:864px;top:388px;width:54px;height:13.5px;background:#efefef;border:1px solid #767676;box-sizing:border-box"></div>
<div class="t" style="left:865.50px;top:390px;color:#aaa;font-size:8px;line-height:10px;transform:scaleX(0.9239);transform-origin:0 0;"><span id="m90">31/12/2024</span></div>
<svg style="position:absolute;left:909px;top:393.5px" width="5" height="3" viewBox="0 0 5 3"><path d="M0 0 H5 L2.5 3 Z" fill="#aaa"/></svg>
<div style="left:761px;top:403px;width:157px;height:14px;background:#efefef;border:1px solid #767676;box-sizing:border-box"></div>
<div class="t" style="left:762.50px;top:405px;color:#aaa;font-size:8px;line-height:10px;transform:scaleX(0.7536);transform-origin:0 0;"><span id="m91">NORMAL</span></div>
<svg style="position:absolute;left:909px;top:408.5px" width="5" height="3" viewBox="0 0 5 3"><path d="M0 0 H5 L2.5 3 Z" fill="#aaa"/></svg>
<div style="left:761px;top:418px;width:157px;height:14px;background:#efefef;border:1px solid #767676;box-sizing:border-box"></div>
<div class="t" style="left:762.50px;top:420px;color:#aaa;font-size:8px;line-height:10px;transform:scaleX(0.7928);transform-origin:0 0;"><span id="m92">MONTO</span></div>
<svg style="position:absolute;left:909px;top:423.5px" width="5" height="3" viewBox="0 0 5 3"><path d="M0 0 H5 L2.5 3 Z" fill="#aaa"/></svg>
<div style="left:761px;top:433px;width:157px;height:48px;background:#fff;border:1px solid #767676;box-sizing:border-box"></div>
<div style="left:907px;top:434px;width:10px;height:46px;background:#f2f2f2"></div>
<svg style="position:absolute;left:909px;top:437px" width="6" height="4" viewBox="0 0 6 4"><path d="M0.5 3.5 L3 0.8 L5.5 3.5" fill="none" stroke="#aaa" stroke-width="0.8"/></svg>
<svg style="position:absolute;left:909px;top:473px" width="6" height="4" viewBox="0 0 6 4"><path d="M0.5 0.5 L3 3.2 L5.5 0.5" fill="none" stroke="#aaa" stroke-width="0.8"/></svg>
</body></html>
